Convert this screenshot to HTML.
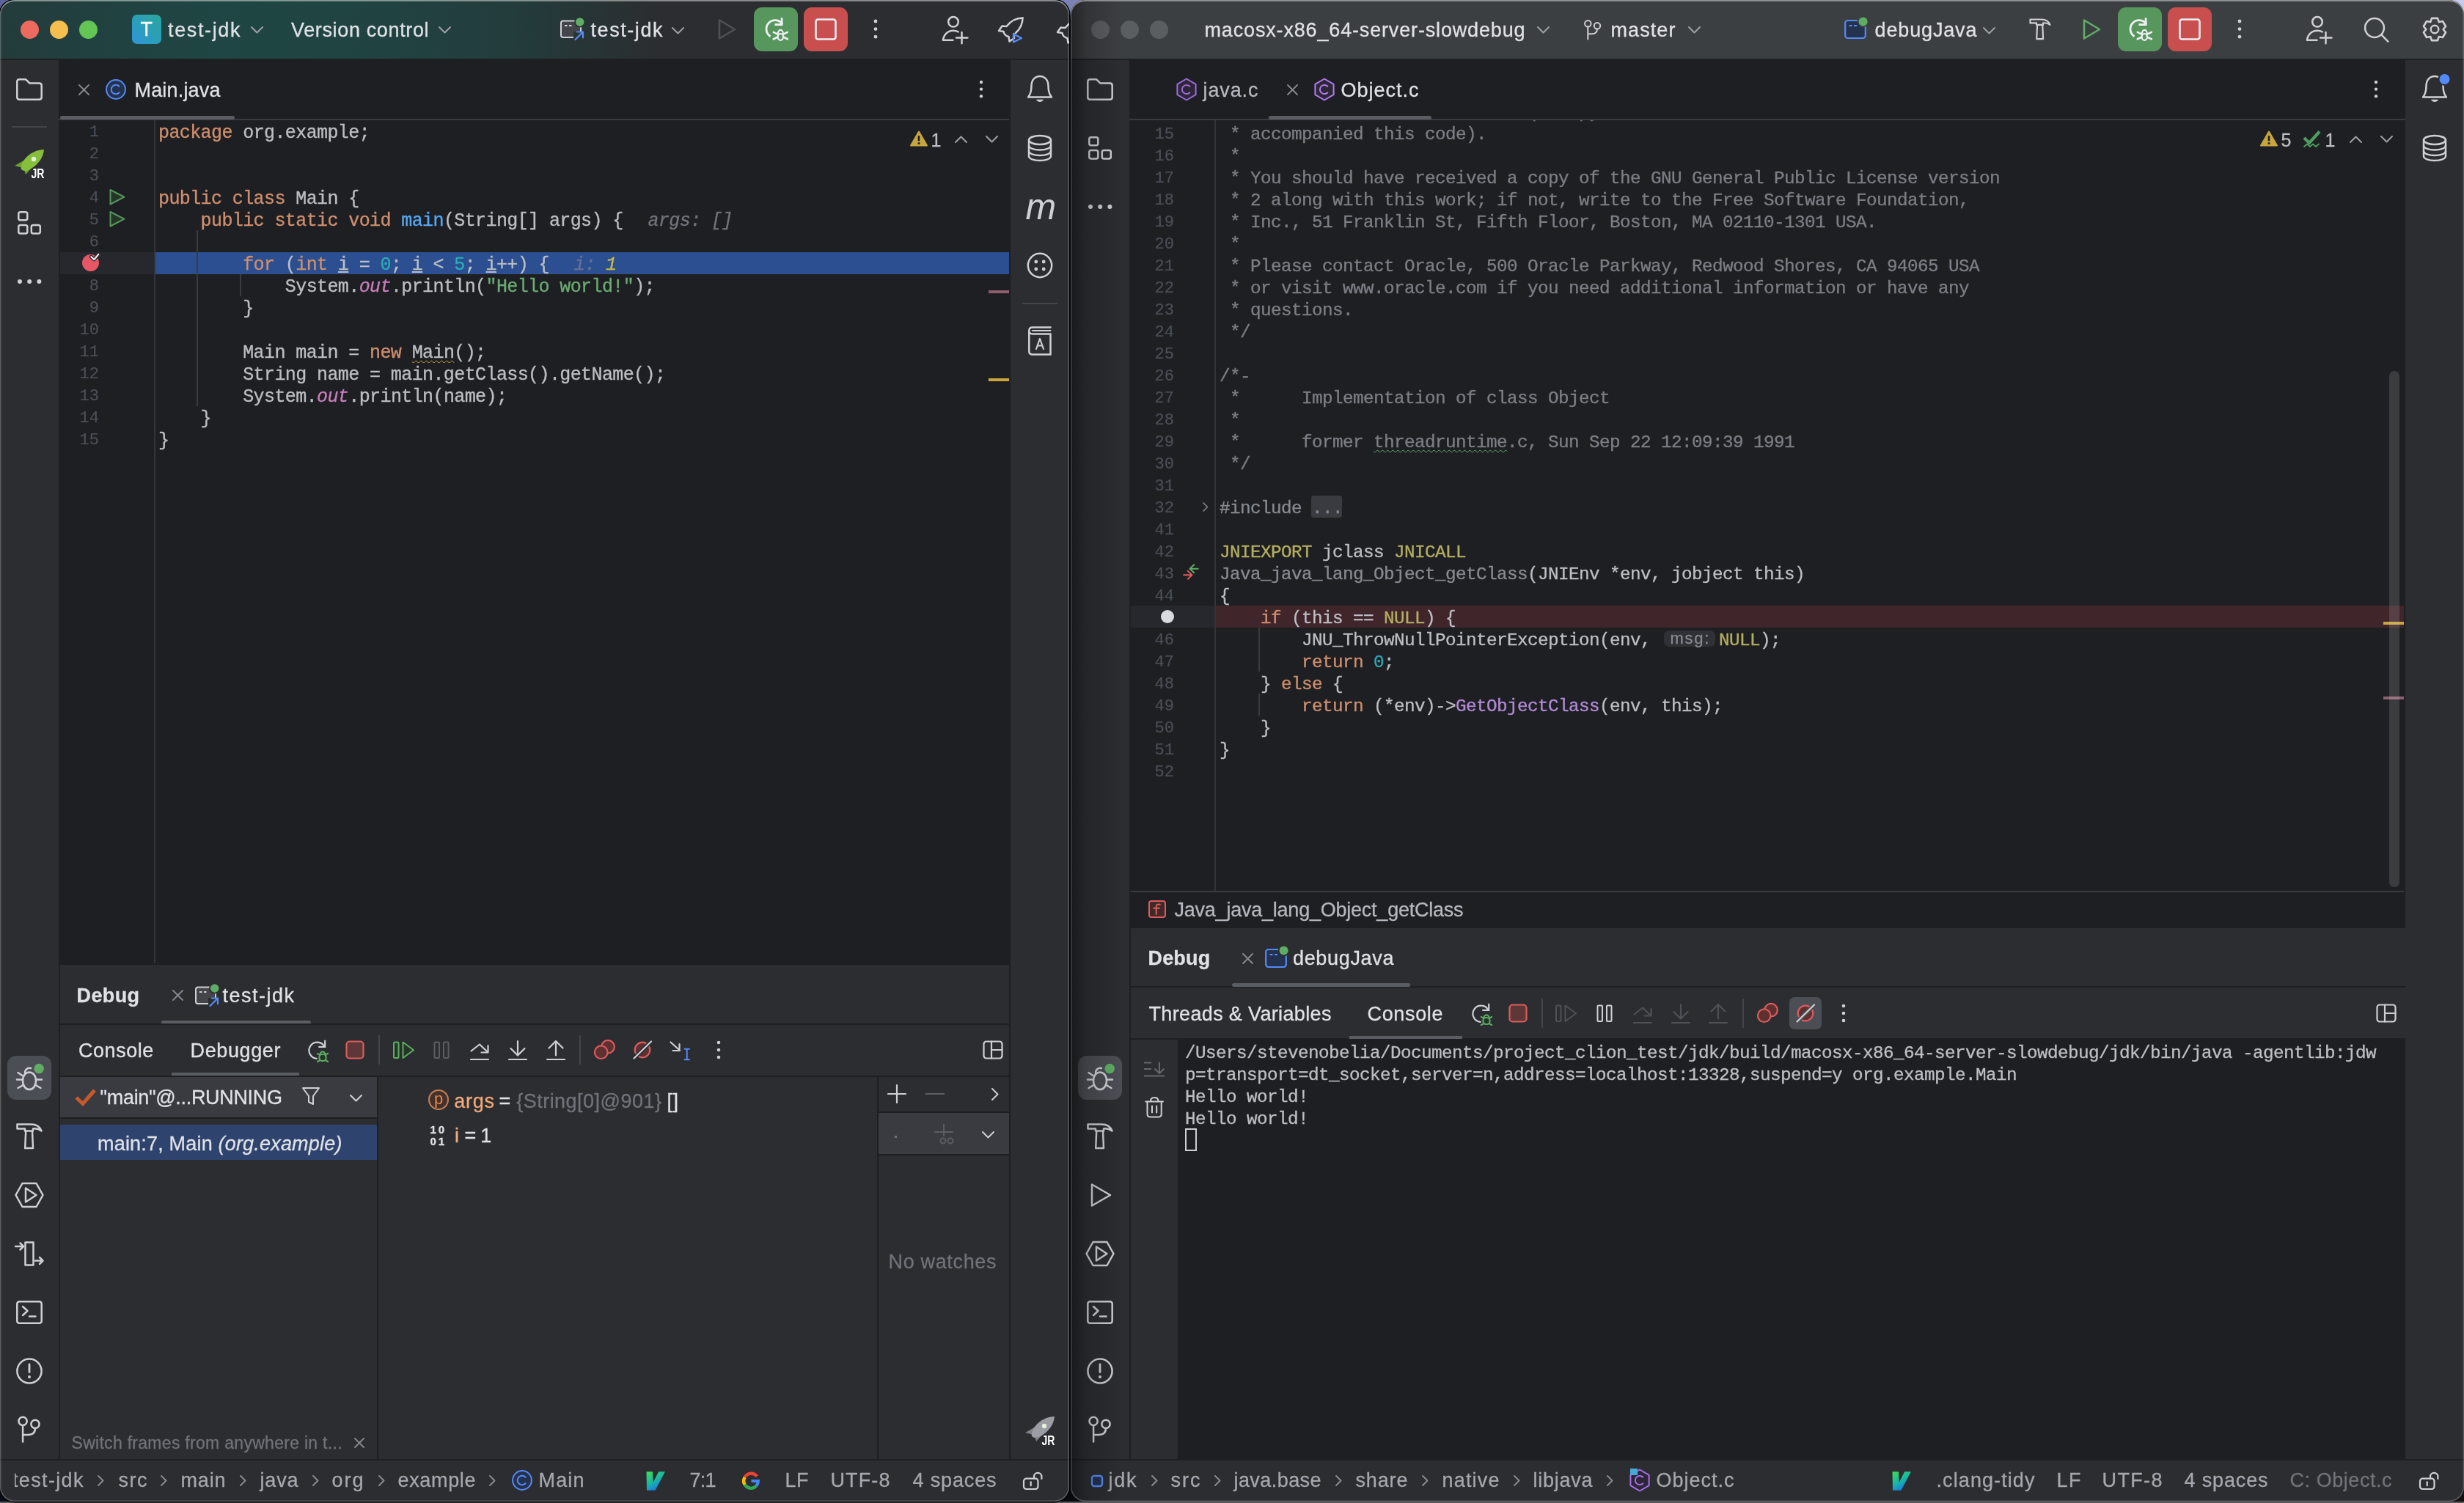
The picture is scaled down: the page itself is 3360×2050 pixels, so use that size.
<!DOCTYPE html>
<html lang="en"><head><meta charset="utf-8"><title>IDE debug session</title>
<style>
html,body{margin:0;padding:0}
body{width:3360px;height:2050px;position:relative;overflow:hidden;background:#07080c;font-family:"Liberation Sans",sans-serif;}
div,svg,span.t,pre{position:absolute}
span.t{white-space:pre;-webkit-text-stroke:0.3px}
span.t i{font-style:italic}
pre{margin:0;font-family:"Liberation Mono",monospace;white-space:pre;-webkit-text-stroke:0.35px}
.win{overflow:hidden}
.win>div{will-change:transform;}
</style></head>
<body>
<div style="left:0px;top:0px;width:3360px;height:2050px;background:#08090d;"></div>
<div style="left:1400px;top:0px;width:120px;height:26px;background:#7a82b6;background:linear-gradient(180deg,#7a82b6 0,#7a82b6 55%,#2a2d45 100%);"></div>
<div style="left:0px;top:0px;width:30px;height:30px;background:#5a639a;"></div>
<div style="left:0px;top:2048px;width:3360px;height:2px;background:#58595b;"></div>
<div style="left:3330px;top:0px;width:30px;height:30px;background:#c6c9e9;"></div>
<div style="left:3330px;top:2020px;width:30px;height:28px;background:#15100f;"></div>
<div style="left:0px;top:2020px;width:14px;height:28px;background:#0a0c18;"></div>
<div class="win" style="left:1460px;top:0;width:1900px;height:2048px;border-radius:20px;background:#2b2d30;"><div style="left:-1460px;top:0;width:3360px;height:2050px">
<div style="left:1460px;top:0px;width:1900px;height:80px;background:#3c3f41;"></div>
<div style="left:1460px;top:80px;width:1900px;height:2px;background:#1e1f22;"></div>
<div style="left:1460px;top:82px;width:80px;height:1908px;background:#2b2d30;"></div>
<div style="left:1540px;top:82px;width:1740px;height:1184px;background:#1e1f22;"></div>
<div style="left:1540px;top:162px;width:1740px;height:2px;background:#393b40;"></div>
<div style="left:3280px;top:82px;width:80px;height:1908px;background:#2b2d30;"></div>
<div style="left:1540px;top:1266px;width:1740px;height:724px;background:#2b2d30;"></div>
<div style="left:1540px;top:1345px;width:1740px;height:2px;background:#1e1f22;"></div>
<div style="left:1540px;top:1416px;width:1740px;height:2px;background:#1e1f22;"></div>
<div style="left:1606px;top:1418px;width:1674px;height:572px;background:#1e1f22;"></div>
<div style="left:1540px;top:1266px;width:2px;height:724px;background:#1e1f22;"></div>
<div style="left:1460px;top:1990px;width:1900px;height:2px;background:#1e1f22;"></div>
<div style="left:1460px;top:1992px;width:1900px;height:56px;background:#2b2d30;"></div>
<div style="left:1487.5px;top:27.5px;width:25px;height:25px;border-radius:50%;background:#5b5e60"></div>
<div style="left:1527.5px;top:27.5px;width:25px;height:25px;border-radius:50%;background:#5b5e60"></div>
<div style="left:1567.5px;top:27.5px;width:25px;height:25px;border-radius:50%;background:#5b5e60"></div>
<span id="t0" class="t" style="left:1642.5px;top:20.8px;line-height:40px;font-size:27px;color:#dfe1e5;letter-spacing:0.84px;">macosx-x86_64-server-slowdebug</span>
<svg style="left:2094.5px;top:34.5px;" width="19" height="12" viewBox="0 0 19 12" fill="none"><path d="M2 2 L9.5 9.5 L17 2" stroke="#9da0a8" stroke-width="2" stroke-linecap="round" stroke-linejoin="round"/></svg>
<span id="t1" class="t" style="left:2196.5px;top:20.8px;line-height:40px;font-size:27px;color:#dfe1e5;letter-spacing:1.09px;">master</span>
<svg style="left:2300.5px;top:34.5px;" width="19" height="12" viewBox="0 0 19 12" fill="none"><path d="M2 2 L9.5 9.5 L17 2" stroke="#9da0a8" stroke-width="2" stroke-linecap="round" stroke-linejoin="round"/></svg>
<span id="t2" class="t" style="left:2556.5px;top:20.8px;line-height:40px;font-size:27px;color:#dfe1e5;letter-spacing:0.86px;">debugJava</span>
<svg style="left:2702.5px;top:35.5px;" width="19" height="12" viewBox="0 0 19 12" fill="none"><path d="M2 2 L9.5 9.5 L17 2" stroke="#9da0a8" stroke-width="2" stroke-linecap="round" stroke-linejoin="round"/></svg>
<div style="left:2888px;top:10px;width:60px;height:60px;border-radius:11px;background:#57965c"></div>
<div style="left:2956px;top:10px;width:60px;height:60px;border-radius:11px;background:#c94f4f"></div>
<svg style="left:2970px;top:24px;" width="32" height="32" viewBox="0 0 32 32" fill="none"><rect x="2.5" y="2.5" width="27" height="27" rx="3" stroke="#eef0f3" stroke-width="2.6"/></svg>
<svg style="left:2837px;top:22px;" width="32" height="36" viewBox="0 0 32 36" fill="none"><path d="M5 5.5 L26 18 L5 30.5 Z" stroke="#5fad65" stroke-width="2.6" stroke-linejoin="round"/></svg>
<svg style="left:3050px;top:25.4px;" width="8" height="29.2" viewBox="0 0 8 29.2" fill="none"><circle cx="4" cy="4.0" r="2.4" fill="#ced0d6"/><circle cx="4" cy="14.6" r="2.4" fill="#ced0d6"/><circle cx="4" cy="25.2" r="2.4" fill="#ced0d6"/></svg>
<span id="t3" class="t" style="left:1640.5px;top:102.8px;line-height:40px;font-size:27px;color:#b4b8bf;letter-spacing:0.89px;">java.c</span>
<svg style="left:1754.5px;top:115.0px;" width="15" height="15" viewBox="0 0 15 15" fill="none"><path d="M1 1 L14 14 M14 1 L1 14" stroke="#868a91" stroke-width="1.8" stroke-linecap="round"/></svg>
<span id="t4" class="t" style="left:1828.5px;top:102.8px;line-height:40px;font-size:27px;color:#dfe1e5;letter-spacing:0.99px;">Object.c</span>
<div style="left:1730px;top:158px;width:222px;height:5px;border-radius:3px;background:#5a5d63"></div>
<svg style="left:3235.5px;top:108.4px;" width="8" height="27.2" viewBox="0 0 8 27.2" fill="none"><circle cx="4" cy="4.0" r="2.2" fill="#ced0d6"/><circle cx="4" cy="13.6" r="2.2" fill="#ced0d6"/><circle cx="4" cy="23.2" r="2.2" fill="#ced0d6"/></svg>
<div style="left:1656px;top:164px;width:2px;height:1052px;background:#313438;"></div>
<div style="left:1542px;top:826px;width:114px;height:30px;background:#26282e;"></div>
<div style="left:1658px;top:826px;width:1620px;height:30px;background:#40252b;"></div>
<div style="left:1716px;top:856px;width:2px;height:60px;background:#393b40;"></div>
<div style="left:1716px;top:946px;width:2px;height:30px;background:#393b40;"></div>
<div style="left:3250px;top:848px;width:28px;height:4px;background:#c9a53e;"></div>
<div style="left:3250px;top:950px;width:28px;height:4px;background:#8f5f6e;"></div>
<div style="left:3258px;top:506px;width:14px;height:704px;border-radius:7px;background:rgba(255,255,255,.13)"></div>
<div style="left:1542px;top:1215px;width:1736px;height:2px;background:#393b40;"></div>
<div style="left:1663px;top:164px;width:1600px;height:12px;overflow:hidden"><pre style="left:0;top:-25.3px;line-height:30px;font-size:24.3px;letter-spacing:-0.58px;color:#7a7e85"> * version 2 for more details (a copy is included in the LICENSE file that</pre></div>
<pre style="left:1663px;top:168.7px;line-height:30px;font-size:24.3px;letter-spacing:-0.58px;"><span style="color:#7a7e85;"> * accompanied this code).</span></pre>
<pre style="left:1663px;top:198.7px;line-height:30px;font-size:24.3px;letter-spacing:-0.58px;"><span style="color:#7a7e85;"> *</span></pre>
<pre style="left:1663px;top:228.7px;line-height:30px;font-size:24.3px;letter-spacing:-0.58px;"><span style="color:#7a7e85;"> * You should have received a copy of the GNU General Public License version</span></pre>
<pre style="left:1663px;top:258.7px;line-height:30px;font-size:24.3px;letter-spacing:-0.58px;"><span style="color:#7a7e85;"> * 2 along with this work; if not, write to the Free Software Foundation,</span></pre>
<pre style="left:1663px;top:288.7px;line-height:30px;font-size:24.3px;letter-spacing:-0.58px;"><span style="color:#7a7e85;"> * Inc., 51 Franklin St, Fifth Floor, Boston, MA 02110-1301 USA.</span></pre>
<pre style="left:1663px;top:318.7px;line-height:30px;font-size:24.3px;letter-spacing:-0.58px;"><span style="color:#7a7e85;"> *</span></pre>
<pre style="left:1663px;top:348.7px;line-height:30px;font-size:24.3px;letter-spacing:-0.58px;"><span style="color:#7a7e85;"> * Please contact Oracle, 500 Oracle Parkway, Redwood Shores, CA 94065 USA</span></pre>
<pre style="left:1663px;top:378.7px;line-height:30px;font-size:24.3px;letter-spacing:-0.58px;"><span style="color:#7a7e85;"> * or visit www.oracle.com if you need additional information or have any</span></pre>
<pre style="left:1663px;top:408.7px;line-height:30px;font-size:24.3px;letter-spacing:-0.58px;"><span style="color:#7a7e85;"> * questions.</span></pre>
<pre style="left:1663px;top:438.7px;line-height:30px;font-size:24.3px;letter-spacing:-0.58px;"><span style="color:#7a7e85;"> */</span></pre>
<pre style="left:1663px;top:498.7px;line-height:30px;font-size:24.3px;letter-spacing:-0.58px;"><span style="color:#7a7e85;">/*-</span></pre>
<pre style="left:1663px;top:528.7px;line-height:30px;font-size:24.3px;letter-spacing:-0.58px;"><span style="color:#7a7e85;"> *      Implementation of class Object</span></pre>
<pre style="left:1663px;top:558.7px;line-height:30px;font-size:24.3px;letter-spacing:-0.58px;"><span style="color:#7a7e85;"> *</span></pre>
<pre style="left:1663px;top:588.7px;line-height:30px;font-size:24.3px;letter-spacing:-0.58px;"><span style="color:#7a7e85;"> *      former </span><span style="color:#7a7e85;text-decoration:underline wavy #5fad65;text-decoration-thickness:1.2px;text-underline-offset:2.5px;">threadruntime</span><span style="color:#7a7e85;">.c, Sun Sep 22 12:09:39 1991</span></pre>
<pre style="left:1663px;top:618.7px;line-height:30px;font-size:24.3px;letter-spacing:-0.58px;"><span style="color:#7a7e85;"> */</span></pre>
<div style="left:1788px;top:676px;width:42px;height:30px;background:#393b40;border-radius:3px"></div>
<pre style="left:1663px;top:678.7px;line-height:30px;font-size:24.3px;letter-spacing:-0.58px;"><span style="color:#868a91;">#include </span><span style="color:#868a91;">...</span></pre>
<pre style="left:1663px;top:738.7px;line-height:30px;font-size:24.3px;letter-spacing:-0.58px;"><span style="color:#b3ae60;">JNIEXPORT</span><span style="color:#bcbec4;"> jclass </span><span style="color:#b3ae60;">JNICALL</span></pre>
<pre style="left:1663px;top:768.7px;line-height:30px;font-size:24.3px;letter-spacing:-0.58px;"><span style="color:#868a91;">Java_java_lang_Object_getClass</span><span style="color:#bcbec4;">(JNIEnv *env, jobject this)</span></pre>
<pre style="left:1663px;top:798.7px;line-height:30px;font-size:24.3px;letter-spacing:-0.58px;"><span style="color:#bcbec4;">{</span></pre>
<pre style="left:1663px;top:828.7px;line-height:30px;font-size:24.3px;letter-spacing:-0.58px;"><span style="color:#cf8e6d;">    if</span><span style="color:#bcbec4;"> (this == </span><span style="color:#b3ae60;">NULL</span><span style="color:#bcbec4;">) {</span></pre>
<pre style="left:1663px;top:858.7px;line-height:30px;font-size:24.3px;letter-spacing:-0.58px;"><span style="color:#bcbec4;">        JNU_ThrowNullPointerException(env, </span></pre>
<div style="left:2269px;top:860px;width:70px;height:22px;background:#2f3136;border-radius:7px"></div>
<span id="t5" class="t" style="left:2277.5px;top:851.3px;line-height:40px;font-size:22px;color:#868a91;letter-spacing:1.77px;">msg:</span>
<pre style="left:2344px;top:858.7px;line-height:30px;font-size:24.3px;letter-spacing:-0.58px;"><span style="color:#b3ae60;">NULL</span><span style="color:#bcbec4;">);</span></pre>
<pre style="left:1663px;top:888.7px;line-height:30px;font-size:24.3px;letter-spacing:-0.58px;"><span style="color:#cf8e6d;">        return</span><span style="color:#bcbec4;"> </span><span style="color:#2aacb8;">0</span><span style="color:#bcbec4;">;</span></pre>
<pre style="left:1663px;top:918.7px;line-height:30px;font-size:24.3px;letter-spacing:-0.58px;"><span style="color:#bcbec4;">    } </span><span style="color:#cf8e6d;">else</span><span style="color:#bcbec4;"> {</span></pre>
<pre style="left:1663px;top:948.7px;line-height:30px;font-size:24.3px;letter-spacing:-0.58px;"><span style="color:#cf8e6d;">        return</span><span style="color:#bcbec4;"> (*env)-&gt;</span><span style="color:#b189d6;">GetObjectClass</span><span style="color:#bcbec4;">(env, this);</span></pre>
<pre style="left:1663px;top:978.7px;line-height:30px;font-size:24.3px;letter-spacing:-0.58px;"><span style="color:#bcbec4;">    }</span></pre>
<pre style="left:1663px;top:1008.7px;line-height:30px;font-size:24.3px;letter-spacing:-0.58px;"><span style="color:#bcbec4;">}</span></pre>
<pre style="left:1521px;width:80px;text-align:right;top:168.6px;line-height:30px;font-size:22px;letter-spacing:0;-webkit-text-stroke:0.15px;color:#4b5059">15</pre>
<pre style="left:1521px;width:80px;text-align:right;top:198.6px;line-height:30px;font-size:22px;letter-spacing:0;-webkit-text-stroke:0.15px;color:#4b5059">16</pre>
<pre style="left:1521px;width:80px;text-align:right;top:228.6px;line-height:30px;font-size:22px;letter-spacing:0;-webkit-text-stroke:0.15px;color:#4b5059">17</pre>
<pre style="left:1521px;width:80px;text-align:right;top:258.6px;line-height:30px;font-size:22px;letter-spacing:0;-webkit-text-stroke:0.15px;color:#4b5059">18</pre>
<pre style="left:1521px;width:80px;text-align:right;top:288.6px;line-height:30px;font-size:22px;letter-spacing:0;-webkit-text-stroke:0.15px;color:#4b5059">19</pre>
<pre style="left:1521px;width:80px;text-align:right;top:318.6px;line-height:30px;font-size:22px;letter-spacing:0;-webkit-text-stroke:0.15px;color:#4b5059">20</pre>
<pre style="left:1521px;width:80px;text-align:right;top:348.6px;line-height:30px;font-size:22px;letter-spacing:0;-webkit-text-stroke:0.15px;color:#4b5059">21</pre>
<pre style="left:1521px;width:80px;text-align:right;top:378.6px;line-height:30px;font-size:22px;letter-spacing:0;-webkit-text-stroke:0.15px;color:#4b5059">22</pre>
<pre style="left:1521px;width:80px;text-align:right;top:408.6px;line-height:30px;font-size:22px;letter-spacing:0;-webkit-text-stroke:0.15px;color:#4b5059">23</pre>
<pre style="left:1521px;width:80px;text-align:right;top:438.6px;line-height:30px;font-size:22px;letter-spacing:0;-webkit-text-stroke:0.15px;color:#4b5059">24</pre>
<pre style="left:1521px;width:80px;text-align:right;top:468.6px;line-height:30px;font-size:22px;letter-spacing:0;-webkit-text-stroke:0.15px;color:#4b5059">25</pre>
<pre style="left:1521px;width:80px;text-align:right;top:498.6px;line-height:30px;font-size:22px;letter-spacing:0;-webkit-text-stroke:0.15px;color:#4b5059">26</pre>
<pre style="left:1521px;width:80px;text-align:right;top:528.6px;line-height:30px;font-size:22px;letter-spacing:0;-webkit-text-stroke:0.15px;color:#4b5059">27</pre>
<pre style="left:1521px;width:80px;text-align:right;top:558.6px;line-height:30px;font-size:22px;letter-spacing:0;-webkit-text-stroke:0.15px;color:#4b5059">28</pre>
<pre style="left:1521px;width:80px;text-align:right;top:588.6px;line-height:30px;font-size:22px;letter-spacing:0;-webkit-text-stroke:0.15px;color:#4b5059">29</pre>
<pre style="left:1521px;width:80px;text-align:right;top:618.6px;line-height:30px;font-size:22px;letter-spacing:0;-webkit-text-stroke:0.15px;color:#4b5059">30</pre>
<pre style="left:1521px;width:80px;text-align:right;top:648.6px;line-height:30px;font-size:22px;letter-spacing:0;-webkit-text-stroke:0.15px;color:#4b5059">31</pre>
<pre style="left:1521px;width:80px;text-align:right;top:678.6px;line-height:30px;font-size:22px;letter-spacing:0;-webkit-text-stroke:0.15px;color:#4b5059">32</pre>
<pre style="left:1521px;width:80px;text-align:right;top:708.6px;line-height:30px;font-size:22px;letter-spacing:0;-webkit-text-stroke:0.15px;color:#4b5059">41</pre>
<pre style="left:1521px;width:80px;text-align:right;top:738.6px;line-height:30px;font-size:22px;letter-spacing:0;-webkit-text-stroke:0.15px;color:#4b5059">42</pre>
<pre style="left:1521px;width:80px;text-align:right;top:768.6px;line-height:30px;font-size:22px;letter-spacing:0;-webkit-text-stroke:0.15px;color:#4b5059">43</pre>
<pre style="left:1521px;width:80px;text-align:right;top:798.6px;line-height:30px;font-size:22px;letter-spacing:0;-webkit-text-stroke:0.15px;color:#4b5059">44</pre>
<pre style="left:1521px;width:80px;text-align:right;top:858.6px;line-height:30px;font-size:22px;letter-spacing:0;-webkit-text-stroke:0.15px;color:#4b5059">46</pre>
<pre style="left:1521px;width:80px;text-align:right;top:888.6px;line-height:30px;font-size:22px;letter-spacing:0;-webkit-text-stroke:0.15px;color:#4b5059">47</pre>
<pre style="left:1521px;width:80px;text-align:right;top:918.6px;line-height:30px;font-size:22px;letter-spacing:0;-webkit-text-stroke:0.15px;color:#4b5059">48</pre>
<pre style="left:1521px;width:80px;text-align:right;top:948.6px;line-height:30px;font-size:22px;letter-spacing:0;-webkit-text-stroke:0.15px;color:#4b5059">49</pre>
<pre style="left:1521px;width:80px;text-align:right;top:978.6px;line-height:30px;font-size:22px;letter-spacing:0;-webkit-text-stroke:0.15px;color:#4b5059">50</pre>
<pre style="left:1521px;width:80px;text-align:right;top:1008.6px;line-height:30px;font-size:22px;letter-spacing:0;-webkit-text-stroke:0.15px;color:#4b5059">51</pre>
<pre style="left:1521px;width:80px;text-align:right;top:1038.6px;line-height:30px;font-size:22px;letter-spacing:0;-webkit-text-stroke:0.15px;color:#4b5059">52</pre>
<svg style="left:1639.0px;top:683.5px;" width="10" height="15" viewBox="0 0 10 15" fill="none"><path d="M2 2 L7.5 7.5 L2 13" stroke="#6f737a" stroke-width="1.8" stroke-linecap="round" stroke-linejoin="round"/></svg>
<div style="left:1583px;top:832px;width:18px;height:18px;border-radius:50%;background:#d9dadd"></div>
<svg style="left:3081px;top:177px;" width="26" height="24" viewBox="0 0 26 24" fill="none"><path d="M13 2.5 L24 21.5 H2 Z" fill="#c9a53e" stroke="#c9a53e" stroke-width="2" stroke-linejoin="round"/><rect x="11.7" y="8" width="2.6" height="7.5" rx="1" fill="#1e1f22"/><circle cx="13" cy="18.6" r="1.5" fill="#1e1f22"/></svg>
<span id="t6" class="t" style="left:3110.5px;top:170.8px;line-height:40px;font-size:25px;color:#bcbec4;">5</span>
<svg style="left:3138px;top:176px;" width="30" height="28" viewBox="0 0 30 28" fill="none"><path d="M4 12 L11 19 L25 3.5" stroke="#4e9f5c" stroke-width="4.2" stroke-linejoin="miter"/><path d="M4 24 L8 20.5 L12 24 L16 20.5 L20 24 L24 20.5" stroke="#4e9f5c" stroke-width="1.8" stroke-linejoin="round" stroke-linecap="round"/></svg>
<span id="t7" class="t" style="left:3170.5px;top:170.8px;line-height:40px;font-size:25px;color:#bcbec4;">1</span>
<svg style="left:3202.5px;top:184.0px;" width="19" height="12" viewBox="0 0 19 12" fill="none"><path d="M2 10 L9.5 2.5 L17 10" stroke="#9da0a8" stroke-width="2" stroke-linecap="round" stroke-linejoin="round"/></svg>
<svg style="left:3244.5px;top:184.0px;" width="19" height="12" viewBox="0 0 19 12" fill="none"><path d="M2 2 L9.5 9.5 L17 2" stroke="#9da0a8" stroke-width="2" stroke-linecap="round" stroke-linejoin="round"/></svg>
<span id="t8" class="t" style="left:1601.5px;top:1220.8px;line-height:40px;font-size:27px;color:#b4b8bf;letter-spacing:-0.23px;">Java_java_lang_Object_getClass</span>
<span id="t9" class="t" style="left:1565.5px;top:1287.3px;line-height:40px;font-size:27px;color:#dfe1e5;font-weight:700;letter-spacing:0.18px;">Debug</span>
<svg style="left:1694.0px;top:1299.5px;" width="15" height="15" viewBox="0 0 15 15" fill="none"><path d="M1 1 L14 14 M14 1 L1 14" stroke="#868a91" stroke-width="1.8" stroke-linecap="round"/></svg>
<span id="t10" class="t" style="left:1763.0px;top:1287.3px;line-height:40px;font-size:27px;color:#dfe1e5;letter-spacing:0.67px;">debugJava</span>
<div style="left:1680px;top:1341px;width:243px;height:5px;border-radius:3px;background:#5a5d63"></div>
<span id="t11" class="t" style="left:1566.5px;top:1362.8px;line-height:40px;font-size:27px;color:#dfe1e5;letter-spacing:0.35px;">Threads &amp; Variables</span>
<span id="t12" class="t" style="left:1864.5px;top:1362.8px;line-height:40px;font-size:27px;color:#dfe1e5;letter-spacing:0.66px;">Console</span>
<div style="left:1840px;top:1413px;width:154px;height:4px;background:#5a5d63"></div>
<div style="left:1542px;top:1418px;width:64px;height:572px;background:#2b2d30;"></div>
<pre style="left:1616px;top:1421.7px;line-height:30px;font-size:24.3px;letter-spacing:-0.58px;"><span style="color:#bcbec4;">/Users/stevenobelia/Documents/project_clion_test/jdk/build/macosx-x86_64-server-slowdebug/jdk/bin/java -agentlib:jdw</span></pre>
<pre style="left:1616px;top:1451.7px;line-height:30px;font-size:24.3px;letter-spacing:-0.58px;"><span style="color:#bcbec4;">p=transport=dt_socket,server=n,address=localhost:13328,suspend=y org.example.Main</span></pre>
<pre style="left:1616px;top:1481.7px;line-height:30px;font-size:24.3px;letter-spacing:-0.58px;"><span style="color:#bcbec4;">Hello world!</span></pre>
<pre style="left:1616px;top:1511.7px;line-height:30px;font-size:24.3px;letter-spacing:-0.58px;"><span style="color:#bcbec4;">Hello world!</span></pre>
<div style="left:1616px;top:1539px;width:12px;height:27px;border:2px solid #ced0d6"></div>
<span id="t13" class="t" style="left:1511.5px;top:1999.3px;line-height:40px;font-size:27px;color:#a4a7ae;letter-spacing:1.74px;">jdk</span>
<svg style="left:1568.5px;top:2010.5px;" width="11" height="17" viewBox="0 0 11 17" fill="none"><path d="M2 2 L8.5 8.5 L2 15" stroke="#868a91" stroke-width="2" stroke-linecap="round" stroke-linejoin="round"/></svg>
<svg style="left:1654.5px;top:2010.5px;" width="11" height="17" viewBox="0 0 11 17" fill="none"><path d="M2 2 L8.5 8.5 L2 15" stroke="#868a91" stroke-width="2" stroke-linecap="round" stroke-linejoin="round"/></svg>
<svg style="left:1819.5px;top:2010.5px;" width="11" height="17" viewBox="0 0 11 17" fill="none"><path d="M2 2 L8.5 8.5 L2 15" stroke="#868a91" stroke-width="2" stroke-linecap="round" stroke-linejoin="round"/></svg>
<svg style="left:1937.5px;top:2010.5px;" width="11" height="17" viewBox="0 0 11 17" fill="none"><path d="M2 2 L8.5 8.5 L2 15" stroke="#868a91" stroke-width="2" stroke-linecap="round" stroke-linejoin="round"/></svg>
<svg style="left:2062.5px;top:2010.5px;" width="11" height="17" viewBox="0 0 11 17" fill="none"><path d="M2 2 L8.5 8.5 L2 15" stroke="#868a91" stroke-width="2" stroke-linecap="round" stroke-linejoin="round"/></svg>
<svg style="left:2189.5px;top:2010.5px;" width="11" height="17" viewBox="0 0 11 17" fill="none"><path d="M2 2 L8.5 8.5 L2 15" stroke="#868a91" stroke-width="2" stroke-linecap="round" stroke-linejoin="round"/></svg>
<span id="t14" class="t" style="left:1596.5px;top:1999.3px;line-height:40px;font-size:27px;color:#a4a7ae;letter-spacing:2.00px;">src</span>
<span id="t15" class="t" style="left:1682.5px;top:1999.3px;line-height:40px;font-size:27px;color:#a4a7ae;letter-spacing:0.43px;">java.base</span>
<span id="t16" class="t" style="left:1848.5px;top:1999.3px;line-height:40px;font-size:27px;color:#a4a7ae;letter-spacing:0.86px;">share</span>
<span id="t17" class="t" style="left:1966.5px;top:1999.3px;line-height:40px;font-size:27px;color:#a4a7ae;letter-spacing:1.19px;">native</span>
<span id="t18" class="t" style="left:2090.5px;top:1999.3px;line-height:40px;font-size:27px;color:#a4a7ae;letter-spacing:0.74px;">libjava</span>
<span id="t19" class="t" style="left:2258.5px;top:1999.3px;line-height:40px;font-size:27px;color:#a4a7ae;letter-spacing:0.99px;">Object.c</span>
<span id="t20" class="t" style="left:2640.5px;top:1999.3px;line-height:40px;font-size:27px;color:#a4a7ae;letter-spacing:1.09px;">.clang-tidy</span>
<span id="t21" class="t" style="left:2804.5px;top:1999.3px;line-height:40px;font-size:27px;color:#a4a7ae;letter-spacing:1.48px;">LF</span>
<span id="t22" class="t" style="left:2866.5px;top:1999.3px;line-height:40px;font-size:27px;color:#a4a7ae;letter-spacing:1.38px;">UTF-8</span>
<span id="t23" class="t" style="left:2978.5px;top:1999.3px;line-height:40px;font-size:27px;color:#a4a7ae;letter-spacing:0.85px;">4 spaces</span>
<span id="t24" class="t" style="left:3122.5px;top:1999.3px;line-height:40px;font-size:27px;color:#6f737a;letter-spacing:0.55px;">C: Object.c</span>
<svg style="left:2143.5px;top:13.0px;" width="56" height="56" viewBox="-28 -28 56 56" fill="none"><g transform="scale(0.75)"><circle cx="-8.9" cy="-11.6" r="5.6" stroke="#ced0d6" stroke-width="2.7" stroke-linecap="round" stroke-linejoin="round"/><circle cx="8" cy="-7.6" r="5.6" stroke="#ced0d6" stroke-width="2.7" stroke-linecap="round" stroke-linejoin="round"/><path d="M-8.9 -6 V16.5 M8 -2 C8 5 4 7 -2 7 H-8.9" stroke="#ced0d6" stroke-width="2.7" stroke-linecap="round" stroke-linejoin="round"/></g></svg>
<svg style="left:2502.0px;top:12.0px;" width="56" height="56" viewBox="-28 -28 56 56" fill="none"><rect x="-13.8" y="-12" width="27.6" height="24" rx="3.5" stroke="#548af7" stroke-width="2.2" fill="#25324d"/><path d="M-8.5 -5 H-4.5 M-2 -5 H2" stroke="#548af7" stroke-width="2"/><circle cx="10.6" cy="-10.5" r="7.8" fill="#3c3f41"/><circle cx="10.6" cy="-10.5" r="6" fill="#5fad65"/></svg>
<svg style="left:2754.0px;top:12.0px;" width="56" height="56" viewBox="-28 -28 56 56" fill="none"><g transform="scale(0.82)"><path d="M-16.5 -16.5 H2 C9 -16.5 14.5 -13 16.5 -7.5 C13 -10 9 -11 5 -10.5 V-7.5 H-6 V-10.5 H-16.5 Z" stroke="#ced0d6" stroke-width="2.6" stroke-linecap="round" stroke-linejoin="round"/><path d="M-4.8 -7 L-5.8 16 H5 L4 -7" stroke="#ced0d6" stroke-width="2.6" stroke-linecap="round" stroke-linejoin="round"/></g></svg>
<svg style="left:2890.0px;top:12.0px;" width="56" height="56" viewBox="-28 -28 56 56" fill="none"><path d="M8.95 -7.1 A12 12 0 1 0 -7.46 9.7" stroke="#eef0f3" stroke-width="2.8"/><path d="M-1.6 -6.5 H8.1 V-15.8" stroke="#eef0f3" stroke-width="2.8" stroke-linejoin="miter"/><path d="M-3.2 3.9 L15.8 13.3 M15.8 3.9 L-3.2 13.3" stroke="#eef0f3" stroke-width="2.7" stroke-linecap="round"/><path d="M2.7 6.5 A3.6 5.6 0 0 1 9.9 6.5" stroke="#eef0f3" stroke-width="2.2"/><ellipse cx="6.3" cy="10.4" rx="3.6" ry="4.4" stroke="#eef0f3" stroke-width="2.2" fill="#57965c"/></svg>
<svg style="left:3132.0px;top:12.0px;" width="56" height="56" viewBox="-28 -28 56 56" fill="none"><circle cx="0" cy="-10.2" r="6.8" stroke="#ced0d6" stroke-width="2.5" stroke-linecap="round" stroke-linejoin="round"/><path d="M-0.5 14.7 H-14 C-13 7 -7.5 1.8 0 1.8 C2.5 1.8 4.7 2.4 6.6 3.4" stroke="#ced0d6" stroke-width="2.5" stroke-linecap="round" stroke-linejoin="round"/><path d="M4 11.5 H19.5 M11.5 4 V19.3" stroke="#ced0d6" stroke-width="2.5" stroke-linecap="round" stroke-linejoin="round"/></svg>
<svg style="left:3212.0px;top:12.0px;" width="56" height="56" viewBox="-28 -28 56 56" fill="none"><circle cx="-2" cy="-2" r="12.9" stroke="#ced0d6" stroke-width="2.5" stroke-linecap="round" stroke-linejoin="round"/><path d="M7.3 7.3 L16.4 16.6" stroke="#ced0d6" stroke-width="2.5" stroke-linecap="round" stroke-linejoin="round"/></svg>
<svg style="left:3292.0px;top:12.0px;" width="56" height="56" viewBox="-28 -28 56 56" fill="none"><path d="M-4.0 -15.1 L4.0 -15.1 L5.8 -10.0 L11.0 -11.0 L15.1 -4.0 L11.6 0.0 L15.1 4.0 L11.0 11.0 L5.8 10.0 L4.0 15.1 L-4.0 15.1 L-5.8 10.0 L-11.0 11.0 L-15.1 4.0 L-11.6 0.0 L-15.1 -4.0 L-11.0 -11.0 L-5.8 -10.0 Z" stroke="#ced0d6" stroke-width="2.6" stroke-linecap="round" stroke-linejoin="round"/><circle cx="0" cy="0" r="5.3" stroke="#ced0d6" stroke-width="2.4" stroke-linecap="round" stroke-linejoin="round"/></svg>
<svg style="left:1472.0px;top:94.0px;" width="56" height="56" viewBox="-28 -28 56 56" fill="none"><path d="M-16.7 -10.5 q0 -3.2 3.2 -3.2 h8.7 l5.3 5.3 h13 q3.2 0 3.2 3.2 v15.7 q0 3.2 -3.2 3.2 h-27 q-3.2 0 -3.2 -3.2 z" stroke="#ced0d6" stroke-width="2.5" stroke-linecap="round" stroke-linejoin="round"/></svg>
<svg style="left:1472.0px;top:174.0px;" width="56" height="56" viewBox="-28 -28 56 56" fill="none"><rect x="-14.7" y="-14.7" width="12" height="11" rx="2.5" stroke="#ced0d6" stroke-width="2.5" stroke-linecap="round" stroke-linejoin="round"/><rect x="-14.7" y="3" width="12" height="11.5" rx="2.5" stroke="#ced0d6" stroke-width="2.5" stroke-linecap="round" stroke-linejoin="round"/><rect x="2.8" y="3" width="12" height="11.5" rx="2.5" stroke="#ced0d6" stroke-width="2.5" stroke-linecap="round" stroke-linejoin="round"/></svg>
<svg style="left:1482.8px;top:277.5px;" width="34.4" height="8" viewBox="0 0 34.4 8" fill="none"><circle cx="4.0" cy="4" r="3" fill="#ced0d6"/><circle cx="17.2" cy="4" r="3" fill="#ced0d6"/><circle cx="30.4" cy="4" r="3" fill="#ced0d6"/></svg>
<div style="left:1470px;top:1440px;width:60px;height:60px;border-radius:12px;background:#4b4e54"></div>
<svg style="left:1472.0px;top:1445.5px;" width="56" height="56" viewBox="-28 -28 56 56" fill="none"><path d="M0 -11.5 c5 0 9 4.5 9 11.5 c0 7 -4 12 -9 12 c-5 0 -9 -5 -9 -12 c0 -7 4 -11.5 9 -11.5 z" stroke="#ced0d6" stroke-width="2.5" stroke-linecap="round" stroke-linejoin="round"/><path d="M-9 -1.5 H-17 M9 -1.5 H17 M-9.5 -7 L-15.5 -11 M-8.5 6 L-15.5 10 M8.5 6 L15.5 10" stroke="#ced0d6" stroke-width="2.5" stroke-linecap="round" stroke-linejoin="round"/><path d="M-6 -10.5 C-6 -15.5 -2 -18 2 -17" stroke="#ced0d6" stroke-width="2.5" stroke-linecap="round" stroke-linejoin="round"/><circle cx="13.2" cy="-16.5" r="8.8" fill="#4b4e54"/><circle cx="13.2" cy="-16.5" r="6.8" fill="#5fad65"/></svg>
<svg style="left:1472.0px;top:1522.0px;" width="56" height="56" viewBox="-28 -28 56 56" fill="none"><path d="M-16.5 -16.5 H2 C9 -16.5 14.5 -13 16.5 -7.5 C13 -10 9 -11 5 -10.5 V-7.5 H-6 V-10.5 H-16.5 Z" stroke="#ced0d6" stroke-width="2.5" stroke-linecap="round" stroke-linejoin="round"/><path d="M-4.8 -7 L-5.8 16 H5 L4 -7" stroke="#ced0d6" stroke-width="2.5" stroke-linecap="round" stroke-linejoin="round"/></svg>
<svg style="left:1472.0px;top:1602.0px;" width="56" height="56" viewBox="-28 -28 56 56" fill="none"><path d="M-11 -14.5 L14 0 L-11 14.5 Z" stroke="#ced0d6" stroke-width="2.5" stroke-linecap="round" stroke-linejoin="round"/></svg>
<svg style="left:1472.0px;top:1682.0px;" width="56" height="56" viewBox="-28 -28 56 56" fill="none"><path d="M-9.5 -16 H9.5 L18.5 0 L9.5 16 H-9.5 L-18.5 0 Z" stroke="#ced0d6" stroke-width="2.5" stroke-linecap="round" stroke-linejoin="round"/><path d="M-5 -9.5 L9.5 0 L-5 9.5 Z" stroke="#ced0d6" stroke-width="2.5" stroke-linecap="round" stroke-linejoin="round"/></svg>
<svg style="left:1472.0px;top:1762.0px;" width="56" height="56" viewBox="-28 -28 56 56" fill="none"><rect x="-16.7" y="-14.7" width="33.4" height="29.4" rx="3" stroke="#ced0d6" stroke-width="2.5" stroke-linecap="round" stroke-linejoin="round"/><path d="M-9 -8 L-2.5 -2 L-9 4 M0 5.5 H8.5" stroke="#ced0d6" stroke-width="2.5" stroke-linecap="round" stroke-linejoin="round"/></svg>
<svg style="left:1472.0px;top:1842.0px;" width="56" height="56" viewBox="-28 -28 56 56" fill="none"><circle cx="0" cy="0" r="16.6" stroke="#ced0d6" stroke-width="2.5" stroke-linecap="round" stroke-linejoin="round"/><path d="M0 -9 V1.5" stroke="#ced0d6" stroke-width="2.8" stroke-linecap="round" stroke-linejoin="round"/><circle cx="0" cy="8" r="2" fill="#ced0d6"/></svg>
<svg style="left:1472.0px;top:1922.0px;" width="56" height="56" viewBox="-28 -28 56 56" fill="none"><circle cx="-8.9" cy="-11.6" r="5.6" stroke="#ced0d6" stroke-width="2.5" stroke-linecap="round" stroke-linejoin="round"/><circle cx="8" cy="-7.6" r="5.6" stroke="#ced0d6" stroke-width="2.5" stroke-linecap="round" stroke-linejoin="round"/><path d="M-8.9 -6 V16.5 M8 -2 C8 5 4 7 -2 7 H-8.9" stroke="#ced0d6" stroke-width="2.5" stroke-linecap="round" stroke-linejoin="round"/></svg>
<svg style="left:3292.0px;top:93.0px;" width="56" height="56" viewBox="-28 -28 56 56" fill="none"><path d="M-16 11.5 C-12.5 7.5 -11.5 4 -11.5 -4 C-11.5 -12 -6.5 -17 0 -17 C6.5 -17 11.5 -12 11.5 -4 C11.5 4 12.5 7.5 16 11.5 Z" stroke="#ced0d6" stroke-width="2.5" stroke-linecap="round" stroke-linejoin="round"/><path d="M-4 15.5 Q0 19 4 15.5 Z" fill="#ced0d6" stroke="#ced0d6" stroke-width="1.5" stroke-linejoin="round"/><circle cx="13.5" cy="-13" r="9" fill="#2b2d30"/><circle cx="13.5" cy="-13" r="7" fill="#548af7"/></svg>
<svg style="left:3292.0px;top:174.0px;" width="56" height="56" viewBox="-28 -28 56 56" fill="none"><ellipse cx="0" cy="-11" rx="15" ry="6" stroke="#ced0d6" stroke-width="2.5" stroke-linecap="round" stroke-linejoin="round"/><path d="M-15 -11 V11 C-15 14.5 -8 17 0 17 C8 17 15 14.5 15 11 V-11" stroke="#ced0d6" stroke-width="2.5" stroke-linecap="round" stroke-linejoin="round"/><path d="M-15 -3.5 C-15 0 -8 2.5 0 2.5 C8 2.5 15 0 15 -3.5 M-15 4 C-15 7.5 -8 10 0 10 C8 10 15 7.5 15 4" stroke="#ced0d6" stroke-width="2.5" stroke-linecap="round" stroke-linejoin="round"/></svg>
<svg style="left:1590.0px;top:94.0px;" width="56" height="56" viewBox="-28 -28 56 56" fill="none"><path d="M0 -14.5 L12.6 -7.2 V7.2 L0 14.5 L-12.6 7.2 V-7.2 Z" stroke="#9b6bdf" stroke-width="2" fill="#2d2636" stroke-linejoin="round"/><path d="M4.4 -4.2 A6.1 6.1 0 1 0 4.4 4.2" stroke="#9b6bdf" stroke-width="2" stroke-linecap="round"/></svg>
<svg style="left:1778.0px;top:94.0px;" width="56" height="56" viewBox="-28 -28 56 56" fill="none"><path d="M0 -14.5 L12.6 -7.2 V7.2 L0 14.5 L-12.6 7.2 V-7.2 Z" stroke="#b07cf2" stroke-width="2" fill="#2d2636" stroke-linejoin="round"/><path d="M4.4 -4.2 A6.1 6.1 0 1 0 4.4 4.2" stroke="#b07cf2" stroke-width="2" stroke-linecap="round"/></svg>
<svg style="left:1596.0px;top:752.0px;" width="56" height="56" viewBox="-28 -28 56 56" fill="none"><path d="M-10 4.2 H1 M-4.3 -1.3 L1.5 4.2 L-4.3 9.7" stroke="#db5c5c" stroke-width="1.9" stroke-linecap="round" stroke-linejoin="round"/><path d="M9.7 -4.3 H-1 M4.3 -9.8 L-1.5 -4.3 L4.3 1.2" stroke="#5fad65" stroke-width="1.9" stroke-linecap="round" stroke-linejoin="round"/></svg>
<svg style="left:1550.0px;top:1212.0px;" width="56" height="56" viewBox="-28 -28 56 56" fill="none"><rect x="-11" y="-11" width="22" height="22" rx="3" stroke="#db5c5c" stroke-width="2" fill="#402929"/><path d="M3.8 -6.3 C0.3 -7.3 -1.3 -5.8 -1.3 -3.3 V7 M-4.8 -1.3 H3" stroke="#db5c5c" stroke-width="2" stroke-linecap="round"/></svg>
<svg style="left:1712.0px;top:1279.0px;" width="56" height="56" viewBox="-28 -28 56 56" fill="none"><rect x="-13.8" y="-12" width="27.6" height="24" rx="3.5" stroke="#548af7" stroke-width="2.2" fill="#25324d"/><path d="M-8.5 -5 H-4.5 M-2 -5 H2" stroke="#548af7" stroke-width="2"/><circle cx="10.6" cy="-10.5" r="7.8" fill="#2b2d30"/><circle cx="10.6" cy="-10.5" r="6" fill="#5fad65"/></svg>
<svg style="left:1990.5px;top:1354.5px;" width="56" height="56" viewBox="-28 -28 56 56" fill="none"><path d="M10.6 -5.4 A11.2 11.2 0 1 0 -0.3 10.9" stroke="#ced0d6" stroke-width="2.2" stroke-linecap="round" stroke-linejoin="round" stroke-linecap="butt"/><path d="M2.3 -5.2 H11.2 V-14.3" stroke="#ced0d6" stroke-width="2.2" stroke-linecap="butt" stroke-linejoin="miter"/><path d="M4 5.8 L0.8 3.9 M12 5.8 L15.2 3.9 M4.8 13 L0.8 15 M11.2 13 L15.2 15" stroke="#5fad65" stroke-width="2" stroke-linecap="round"/><path d="M4.4 5.5 A3.6 3.9 0 0 1 11.6 5.5" stroke="#5fad65" stroke-width="2"/><circle cx="8" cy="9.4" r="4.7" stroke="#5fad65" stroke-width="2" fill="#253627"/></svg>
<svg style="left:2042.0px;top:1354.0px;" width="56" height="56" viewBox="-28 -28 56 56" fill="none"><rect x="-11.5" y="-11.5" width="23" height="23" rx="4" stroke="#db5c5c" stroke-width="2.2" fill="#5e3838"/></svg>
<div style="left:2102px;top:1362px;width:2px;height:40px;background:#43454a;"></div>
<svg style="left:2107.0px;top:1354.0px;" width="56" height="56" viewBox="-28 -28 56 56" fill="none"><rect x="-13" y="-10.5" width="6.5" height="21.5" rx="1.5" stroke="#4e5157" stroke-width="2" fill="none"/><path d="M-0.5 -10.5 L14 0.3 L-0.5 11 Z" stroke="#4e5157" stroke-width="2" fill="none" stroke-linejoin="round"/></svg>
<svg style="left:2160.0px;top:1354.0px;" width="56" height="56" viewBox="-28 -28 56 56" fill="none"><rect x="-9.5" y="-10.5" width="6.5" height="21.5" rx="1" stroke="#ced0d6" stroke-width="2" fill="none"/><rect x="3" y="-10.5" width="6.5" height="21.5" rx="1" stroke="#ced0d6" stroke-width="2" fill="none"/></svg>
<svg style="left:2212.0px;top:1354.0px;" width="56" height="56" viewBox="-28 -28 56 56" fill="none"><path d="M-11.5 1.5 L0 -7.5 L11 3" stroke="#4e5157" stroke-width="2.2" stroke-linecap="round" stroke-linejoin="round"/><path d="M11.5 -6 V3.5 H2.5" stroke="#4e5157" stroke-width="2.2" stroke-linecap="round" stroke-linejoin="round"/><path d="M-12 13 H12" stroke="#4e5157" stroke-width="2.2" stroke-linecap="round" stroke-linejoin="round"/></svg>
<svg style="left:2264.0px;top:1354.0px;" width="56" height="56" viewBox="-28 -28 56 56" fill="none"><path d="M0 -12 V7 M-9.5 -2 L0 7.5 L9.5 -2" stroke="#4e5157" stroke-width="2.2" stroke-linecap="round" stroke-linejoin="round"/><path d="M-12 13 H12" stroke="#4e5157" stroke-width="2.2" stroke-linecap="round" stroke-linejoin="round"/></svg>
<svg style="left:2315.0px;top:1354.0px;" width="56" height="56" viewBox="-28 -28 56 56" fill="none"><path d="M0 7.5 V-11.5 M-9.5 -2.5 L0 -12 L9.5 -2.5" stroke="#4e5157" stroke-width="2.2" stroke-linecap="round" stroke-linejoin="round"/><path d="M-12 13 H12" stroke="#4e5157" stroke-width="2.2" stroke-linecap="round" stroke-linejoin="round"/></svg>
<div style="left:2376px;top:1362px;width:2px;height:40px;background:#43454a;"></div>
<svg style="left:2382.0px;top:1354.0px;" width="56" height="56" viewBox="-28 -28 56 56" fill="none"><circle cx="5" cy="-4.3" r="8.8" stroke="#db5c5c" stroke-width="2.2" fill="#5e3030"/><circle cx="-4.3" cy="3.2" r="8.8" stroke="#db5c5c" stroke-width="2.2" fill="#5e3030"/></svg>
<div style="left:2440px;top:1360px;width:44px;height:44px;border-radius:7px;background:#4b4e54"></div>
<svg style="left:2434.0px;top:1354.0px;" width="56" height="56" viewBox="-28 -28 56 56" fill="none"><circle cx="0" cy="0" r="10.3" stroke="#db5c5c" stroke-width="2.2" fill="#5e3030"/><path d="M-11.5 11.5 L12 -11.5" stroke="#4b4e54" stroke-width="5.5"/><path d="M-11.5 11.5 L12 -11.5" stroke="#ced0d6" stroke-width="2.2" stroke-linecap="round" stroke-linejoin="round"/></svg>
<svg style="left:2510px;top:1368px;" width="8" height="28" viewBox="0 0 8 28" fill="none"><circle cx="4" cy="4" r="2.3" fill="#ced0d6"/><circle cx="4" cy="14" r="2.3" fill="#ced0d6"/><circle cx="4" cy="24" r="2.3" fill="#ced0d6"/></svg>
<svg style="left:3226.0px;top:1354.0px;" width="56" height="56" viewBox="-28 -28 56 56" fill="none"><rect x="-12.5" y="-11.5" width="25" height="23" rx="3.5" stroke="#ced0d6" stroke-width="2.2" stroke-linecap="round" stroke-linejoin="round"/><path d="M-2 -11.5 V11.5 M-2 0 H12.5" stroke="#ced0d6" stroke-width="2.2" stroke-linecap="round" stroke-linejoin="round"/></svg>
<svg style="left:1546.0px;top:1429.5px;" width="56" height="56" viewBox="-28 -28 56 56" fill="none"><path d="M-14 -8.5 H-4 M-14 0 H-4 M-14 9.5 H14 M7 -9.5 V5.5 M0.5 -0.5 L7 6 L13.5 -0.5" stroke="#65676c" stroke-width="2" stroke-linecap="butt" stroke-linejoin="miter"/></svg>
<svg style="left:1546.0px;top:1482.0px;" width="56" height="56" viewBox="-28 -28 56 56" fill="none"><path d="M-11.6 -7.4 H12 M-5 -8 C-5 -12.5 -2.5 -13 0.2 -13 C3 -13 5.5 -12.5 5.5 -8 M-9.5 -6 V9.5 C-9.5 12 -8 13.4 -5.5 13.4 H5.7 C8.2 13.4 9.7 12 9.7 9.5 V-6 M-3 -1.5 V7.5 M3.2 -1.5 V7.5" stroke="#ced0d6" stroke-width="2" stroke-linecap="round" stroke-linejoin="round"/></svg>
<svg style="left:1468.0px;top:1992.0px;" width="56" height="56" viewBox="-28 -28 56 56" fill="none"><rect x="-7" y="-7" width="14" height="14" rx="3" stroke="#548af7" stroke-width="2.4" fill="#25324d"/></svg>
<svg style="left:2208.0px;top:1991.0px;" width="56" height="56" viewBox="-28 -28 56 56" fill="none"><path d="M0 -14.5 L12.6 -7.2 V7.2 L0 14.5 L-12.6 7.2 V-7.2 Z" stroke="#a571e6" stroke-width="2" fill="#2d2636" stroke-linejoin="round"/><path d="M4.4 -4.2 A6.1 6.1 0 1 0 4.4 4.2" stroke="#a571e6" stroke-width="2" stroke-linecap="round"/><rect x="-13" y="-16" width="10" height="9" fill="#4aa8d8"/></svg>
<svg style="left:2578px;top:2005px" width="30" height="30" viewBox="-15 -15 30 30"><defs><linearGradient id="vg2593" x1="0" y1="0" x2="0.6" y2="1"><stop offset="0" stop-color="#3fdd55"/><stop offset="0.55" stop-color="#18b7a4"/><stop offset="1" stop-color="#1f6ff2"/></linearGradient></defs><path d="M-12.5 -12.7 H-4 L-3.4 2 L4.2 -12.7 H13 L-0.5 12.8 H-12 Z" fill="url(#vg2593)"/></svg>
<svg style="left:3282.0px;top:1991.0px;" width="56" height="56" viewBox="-28 -28 56 56" fill="none"><rect x="-10" y="-2.3" width="19.5" height="14.3" rx="3.5" stroke="#ced0d6" stroke-width="2.2" stroke-linecap="round" stroke-linejoin="round"/><path d="M4 -2.5 V-5 A5.2 5.2 0 0 1 14.4 -5 V-2" stroke="#ced0d6" stroke-width="2.2" stroke-linecap="round" stroke-linejoin="round"/><path d="M-0.3 2.3 V7.3" stroke="#ced0d6" stroke-width="2.2" stroke-linecap="round" stroke-linejoin="round"/></svg>
<div style="left:1460px;top:0px;width:70px;height:2050px;background:transparent;background:linear-gradient(90deg,rgba(0,0,0,.45),rgba(0,0,0,.18) 30%,rgba(0,0,0,0));"></div>
</div></div>
<div style="left:1460px;top:0;width:1900px;height:2048px;border-radius:20px;box-shadow:inset 0 0 0 1.5px rgba(255,255,255,.2), inset 0 2px 0 0 rgba(255,255,255,.3);"></div>
<div class="win" style="left:0;top:0;width:1458px;height:2048px;border-radius:20px;background:#2b2d30;box-shadow:0 0 0 1.5px #000;"><div style="left:0;top:0;width:3360px;height:2050px">
<div style="left:0px;top:0px;width:1458px;height:80px;background:#2b2d30;background:linear-gradient(90deg,#243b3b 0,#204241 160px,#1f4644 300px,#204341 520px,#233c3c 700px,rgba(40,52,53,0) 900px),#2b2d30;"></div>
<div style="left:0px;top:80px;width:1458px;height:2px;background:#1e1f22;"></div>
<div style="left:0px;top:82px;width:80px;height:1908px;background:#2b2d30;"></div>
<div style="left:80px;top:82px;width:1298px;height:1232px;background:#1e1f22;"></div>
<div style="left:80px;top:162px;width:1296px;height:2px;background:#393b40;"></div>
<div style="left:1376px;top:82px;width:2px;height:1908px;background:#1e1f22;"></div>
<div style="left:1378px;top:82px;width:80px;height:1908px;background:#2b2d30;"></div>
<div style="left:80px;top:1314px;width:1296px;height:2px;background:#1e1f22;"></div>
<div style="left:80px;top:1316px;width:1296px;height:674px;background:#2b2d30;"></div>
<div style="left:80px;top:1316px;width:2px;height:674px;background:#1e1f22;"></div>
<div style="left:0px;top:1990px;width:1458px;height:2px;background:#1e1f22;"></div>
<div style="left:0px;top:1992px;width:1458px;height:56px;background:#2b2d30;"></div>
<div style="left:27.5px;top:27.5px;width:25px;height:25px;border-radius:50%;background:#ed6a5e"></div>
<div style="left:67.5px;top:27.5px;width:25px;height:25px;border-radius:50%;background:#f5bf4f"></div>
<div style="left:107.5px;top:27.5px;width:25px;height:25px;border-radius:50%;background:#62c554"></div>
<div style="left:180px;top:20px;width:40px;height:40px;border-radius:7px;background:linear-gradient(45deg,#2d96d8,#2aa79a)"></div>
<span id="t25" class="t" style="left:191.5px;top:20.3px;line-height:40px;font-size:27px;color:#ffffff;">T</span>
<span id="t26" class="t" style="left:229.1px;top:20.8px;line-height:40px;font-size:27px;color:#dfe1e5;letter-spacing:1.62px;">test-jdk</span>
<svg style="left:340.5px;top:34.5px;" width="19" height="12" viewBox="0 0 19 12" fill="none"><path d="M2 2 L9.5 9.5 L17 2" stroke="#9da0a8" stroke-width="2" stroke-linecap="round" stroke-linejoin="round"/></svg>
<span id="t27" class="t" style="left:397.0px;top:20.8px;line-height:40px;font-size:27px;color:#dfe1e5;letter-spacing:0.64px;">Version control</span>
<svg style="left:596.5px;top:34.5px;" width="19" height="12" viewBox="0 0 19 12" fill="none"><path d="M2 2 L9.5 9.5 L17 2" stroke="#9da0a8" stroke-width="2" stroke-linecap="round" stroke-linejoin="round"/></svg>
<span id="t28" class="t" style="left:805.5px;top:20.8px;line-height:40px;font-size:27px;color:#dfe1e5;letter-spacing:1.57px;">test-jdk</span>
<svg style="left:914.5px;top:35.5px;" width="19" height="12" viewBox="0 0 19 12" fill="none"><path d="M2 2 L9.5 9.5 L17 2" stroke="#9da0a8" stroke-width="2" stroke-linecap="round" stroke-linejoin="round"/></svg>
<div style="left:1028px;top:10px;width:60px;height:60px;border-radius:11px;background:#57965c"></div>
<div style="left:1096px;top:10px;width:60px;height:60px;border-radius:11px;background:#c94f4f"></div>
<svg style="left:1110px;top:24px;" width="32" height="32" viewBox="0 0 32 32" fill="none"><rect x="2.5" y="2.5" width="27" height="27" rx="3" stroke="#eef0f3" stroke-width="2.6"/></svg>
<svg style="left:976px;top:22px;" width="32" height="36" viewBox="0 0 32 36" fill="none"><path d="M5 5.5 L26 18 L5 30.5 Z" stroke="#4e5157" stroke-width="2.6" stroke-linejoin="round"/></svg>
<svg style="left:1190px;top:25.4px;" width="8" height="29.2" viewBox="0 0 8 29.2" fill="none"><circle cx="4" cy="4.0" r="2.4" fill="#ced0d6"/><circle cx="4" cy="14.6" r="2.4" fill="#ced0d6"/><circle cx="4" cy="25.2" r="2.4" fill="#ced0d6"/></svg>
<svg style="left:106.5px;top:115.0px;" width="15" height="15" viewBox="0 0 15 15" fill="none"><path d="M1 1 L14 14 M14 1 L1 14" stroke="#868a91" stroke-width="1.8" stroke-linecap="round"/></svg>
<span id="t29" class="t" style="left:183.5px;top:102.8px;line-height:40px;font-size:27px;color:#dfe1e5;letter-spacing:0.18px;">Main.java</span>
<div style="left:82px;top:158px;width:238px;height:5px;border-radius:3px;background:#5a5d63"></div>
<svg style="left:1334px;top:108.4px;" width="8" height="27.2" viewBox="0 0 8 27.2" fill="none"><circle cx="4" cy="4.0" r="2.2" fill="#ced0d6"/><circle cx="4" cy="13.6" r="2.2" fill="#ced0d6"/><circle cx="4" cy="23.2" r="2.2" fill="#ced0d6"/></svg>
<div style="left:210px;top:164px;width:2px;height:1150px;background:#313438;"></div>
<div style="left:82px;top:344px;width:128px;height:30px;background:#26282e;"></div>
<div style="left:212px;top:344px;width:1164px;height:30px;background:#2b4f91;"></div>
<div style="left:268px;top:314px;width:2px;height:240px;background:#393b40;"></div>
<div style="left:327px;top:374px;width:2px;height:30px;background:#393b40;"></div>
<div style="left:1348px;top:396px;width:28px;height:4px;background:#8f5f6e;"></div>
<div style="left:1348px;top:516px;width:28px;height:4px;background:#c9a53e;"></div>
<pre style="left:216px;top:166.5px;line-height:30px;font-size:25px;letter-spacing:-0.6px;"><span style="color:#cf8e6d;">package</span><span style="color:#bcbec4;"> org.example;</span></pre>
<pre style="left:216px;top:256.5px;line-height:30px;font-size:25px;letter-spacing:-0.6px;"><span style="color:#cf8e6d;">public class</span><span style="color:#bcbec4;"> Main {</span></pre>
<pre style="left:216px;top:286.5px;line-height:30px;font-size:25px;letter-spacing:-0.6px;"><span style="color:#cf8e6d;">    public static void </span><span style="color:#56a8f5;">main</span><span style="color:#bcbec4;">(String[] args) {</span><span style="color:#6f737a;font-style:italic;padding-left:5px;">  args: []</span></pre>
<pre style="left:216px;top:346.5px;line-height:30px;font-size:25px;letter-spacing:-0.6px;"><span style="color:#cf8e6d;">        for</span><span style="color:#bcbec4;"> (</span><span style="color:#cf8e6d;">int</span><span style="color:#bcbec4;"> </span><span style="color:#bcbec4;text-decoration:underline;text-decoration-thickness:2px;text-underline-offset:1.5px;">i</span><span style="color:#bcbec4;"> = </span><span style="color:#2aacb8;">0</span><span style="color:#bcbec4;">; </span><span style="color:#bcbec4;text-decoration:underline;text-decoration-thickness:2px;text-underline-offset:1.5px;">i</span><span style="color:#bcbec4;"> &lt; </span><span style="color:#2aacb8;">5</span><span style="color:#bcbec4;">; </span><span style="color:#bcbec4;text-decoration:underline;text-decoration-thickness:2px;text-underline-offset:1.5px;">i</span><span style="color:#bcbec4;">++) {</span><span style="color:#68728f;font-style:italic;padding-left:5px;">  i:</span><span style="color:#c9b84a;font-style:italic;"> 1</span></pre>
<pre style="left:216px;top:376.5px;line-height:30px;font-size:25px;letter-spacing:-0.6px;"><span style="color:#bcbec4;">            System.</span><span style="color:#c77dbb;font-style:italic;">out</span><span style="color:#bcbec4;">.println(</span><span style="color:#6aab73;">&quot;Hello world!&quot;</span><span style="color:#bcbec4;">);</span></pre>
<pre style="left:216px;top:406.5px;line-height:30px;font-size:25px;letter-spacing:-0.6px;"><span style="color:#bcbec4;">        }</span></pre>
<pre style="left:216px;top:466.5px;line-height:30px;font-size:25px;letter-spacing:-0.6px;"><span style="color:#bcbec4;">        Main main = </span><span style="color:#cf8e6d;">new</span><span style="color:#bcbec4;"> </span><span style="color:#bcbec4;text-decoration:underline wavy #c9a53e;text-decoration-thickness:1.2px;text-underline-offset:2.5px;">Main</span><span style="color:#bcbec4;">();</span></pre>
<pre style="left:216px;top:496.5px;line-height:30px;font-size:25px;letter-spacing:-0.6px;"><span style="color:#bcbec4;">        String name = main.getClass().getName();</span></pre>
<pre style="left:216px;top:526.5px;line-height:30px;font-size:25px;letter-spacing:-0.6px;"><span style="color:#bcbec4;">        System.</span><span style="color:#c77dbb;font-style:italic;">out</span><span style="color:#bcbec4;">.println(name);</span></pre>
<pre style="left:216px;top:556.5px;line-height:30px;font-size:25px;letter-spacing:-0.6px;"><span style="color:#bcbec4;">    }</span></pre>
<pre style="left:216px;top:586.5px;line-height:30px;font-size:25px;letter-spacing:-0.6px;"><span style="color:#bcbec4;">}</span></pre>
<pre style="left:55px;width:80px;text-align:right;top:166.2px;line-height:30px;font-size:22px;letter-spacing:0;-webkit-text-stroke:0.15px;color:#4b5059">1</pre>
<pre style="left:55px;width:80px;text-align:right;top:196.2px;line-height:30px;font-size:22px;letter-spacing:0;-webkit-text-stroke:0.15px;color:#4b5059">2</pre>
<pre style="left:55px;width:80px;text-align:right;top:226.2px;line-height:30px;font-size:22px;letter-spacing:0;-webkit-text-stroke:0.15px;color:#4b5059">3</pre>
<pre style="left:55px;width:80px;text-align:right;top:256.2px;line-height:30px;font-size:22px;letter-spacing:0;-webkit-text-stroke:0.15px;color:#4b5059">4</pre>
<pre style="left:55px;width:80px;text-align:right;top:286.2px;line-height:30px;font-size:22px;letter-spacing:0;-webkit-text-stroke:0.15px;color:#4b5059">5</pre>
<pre style="left:55px;width:80px;text-align:right;top:316.2px;line-height:30px;font-size:22px;letter-spacing:0;-webkit-text-stroke:0.15px;color:#4b5059">6</pre>
<pre style="left:55px;width:80px;text-align:right;top:376.2px;line-height:30px;font-size:22px;letter-spacing:0;-webkit-text-stroke:0.15px;color:#4b5059">8</pre>
<pre style="left:55px;width:80px;text-align:right;top:406.2px;line-height:30px;font-size:22px;letter-spacing:0;-webkit-text-stroke:0.15px;color:#4b5059">9</pre>
<pre style="left:55px;width:80px;text-align:right;top:436.2px;line-height:30px;font-size:22px;letter-spacing:0;-webkit-text-stroke:0.15px;color:#4b5059">10</pre>
<pre style="left:55px;width:80px;text-align:right;top:466.2px;line-height:30px;font-size:22px;letter-spacing:0;-webkit-text-stroke:0.15px;color:#4b5059">11</pre>
<pre style="left:55px;width:80px;text-align:right;top:496.2px;line-height:30px;font-size:22px;letter-spacing:0;-webkit-text-stroke:0.15px;color:#4b5059">12</pre>
<pre style="left:55px;width:80px;text-align:right;top:526.2px;line-height:30px;font-size:22px;letter-spacing:0;-webkit-text-stroke:0.15px;color:#4b5059">13</pre>
<pre style="left:55px;width:80px;text-align:right;top:556.2px;line-height:30px;font-size:22px;letter-spacing:0;-webkit-text-stroke:0.15px;color:#4b5059">14</pre>
<pre style="left:55px;width:80px;text-align:right;top:586.2px;line-height:30px;font-size:22px;letter-spacing:0;-webkit-text-stroke:0.15px;color:#4b5059">15</pre>
<svg style="left:147px;top:256px;" width="26" height="26" viewBox="0 0 26 26" fill="none"><path d="M3.5 3 L22.5 12.6 L3.5 22.5 Z" fill="#253627" stroke="#57965c" stroke-width="2" stroke-linejoin="round"/></svg>
<svg style="left:147px;top:286px;" width="26" height="26" viewBox="0 0 26 26" fill="none"><path d="M3.5 3 L22.5 12.6 L3.5 22.5 Z" fill="#253627" stroke="#57965c" stroke-width="2" stroke-linejoin="round"/></svg>
<div style="left:112px;top:346.5px;width:23px;height:23px;border-radius:50%;background:#e55765"></div>
<svg style="left:120px;top:342px;" width="20" height="16" viewBox="0 0 20 16" fill="none"><path d="M4.3 8.3 L8.3 12 L14.3 4.8" stroke="#3a2c33" stroke-width="5" stroke-linecap="round" stroke-linejoin="round"/><path d="M4.3 8.3 L8.3 12 L14.3 4.8" stroke="#eef0f3" stroke-width="2.1" stroke-linecap="round" stroke-linejoin="round"/></svg>
<svg style="left:1240px;top:177px;" width="26" height="24" viewBox="0 0 26 24" fill="none"><path d="M13 2.5 L24 21.5 H2 Z" fill="#c9a53e" stroke="#c9a53e" stroke-width="2" stroke-linejoin="round"/><rect x="11.7" y="8" width="2.6" height="7.5" rx="1" fill="#1e1f22"/><circle cx="13" cy="18.6" r="1.5" fill="#1e1f22"/></svg>
<span id="t30" class="t" style="left:1269.5px;top:170.8px;line-height:40px;font-size:25px;color:#bcbec4;">1</span>
<svg style="left:1300.5px;top:184.0px;" width="19" height="12" viewBox="0 0 19 12" fill="none"><path d="M2 10 L9.5 2.5 L17 10" stroke="#9da0a8" stroke-width="2" stroke-linecap="round" stroke-linejoin="round"/></svg>
<svg style="left:1342.5px;top:184.0px;" width="19" height="12" viewBox="0 0 19 12" fill="none"><path d="M2 2 L9.5 9.5 L17 2" stroke="#9da0a8" stroke-width="2" stroke-linecap="round" stroke-linejoin="round"/></svg>
<span id="t31" class="t" style="left:104.5px;top:1337.8px;line-height:40px;font-size:27px;color:#dfe1e5;font-weight:700;letter-spacing:0.38px;">Debug</span>
<svg style="left:234.5px;top:1350.0px;" width="15" height="15" viewBox="0 0 15 15" fill="none"><path d="M1 1 L14 14 M14 1 L1 14" stroke="#868a91" stroke-width="1.8" stroke-linecap="round"/></svg>
<span id="t32" class="t" style="left:303.5px;top:1337.8px;line-height:40px;font-size:27px;color:#dfe1e5;letter-spacing:1.51px;">test-jdk</span>
<div style="left:220px;top:1392px;width:204px;height:5px;border-radius:3px;background:#5a5d63"></div>
<div style="left:82px;top:1396px;width:1294px;height:2px;background:#1e1f22;"></div>
<span id="t33" class="t" style="left:107.0px;top:1413.3px;line-height:40px;font-size:27px;color:#dfe1e5;letter-spacing:0.54px;">Console</span>
<span id="t34" class="t" style="left:259.5px;top:1413.3px;line-height:40px;font-size:27px;color:#dfe1e5;letter-spacing:0.63px;">Debugger</span>
<div style="left:234px;top:1463px;width:174px;height:4px;background:#5a5d63"></div>
<div style="left:82px;top:1467px;width:1294px;height:2px;background:#1e1f22;"></div>
<div style="left:82px;top:1469px;width:432px;height:55px;background:#393b40;"></div>
<div style="left:82px;top:1524px;width:432px;height:2px;background:#1e1f22;"></div>
<div style="left:82px;top:1534px;width:432px;height:48px;background:#2e436e;"></div>
<div style="left:514px;top:1469px;width:2px;height:521px;background:#1e1f22;"></div>
<span id="t35" class="t" style="left:136.5px;top:1477.3px;line-height:40px;font-size:27px;color:#dfe1e5;letter-spacing:-0.32px;">&quot;main&quot;@...RUNNING</span>
<span id="t36" class="t" style="left:133.0px;top:1540.3px;line-height:40px;font-size:27px;color:#dfe1e5;letter-spacing:0.19px;">main:7, Main <i>(org.example)</i></span>
<svg style="left:100px;top:1482px;" width="34" height="28" viewBox="0 0 34 28" fill="none"><path d="M4 15 L13 23.5 L29 5" stroke="#c7592a" stroke-width="5" stroke-linejoin="miter"/></svg>
<svg style="left:410px;top:1480px;" width="30" height="32" viewBox="0 0 30 32" fill="none"><path d="M3 4 H25 L17 15 V26 L11 23 V15 Z" stroke="#ced0d6" stroke-width="2" stroke-linejoin="round"/></svg>
<svg style="left:476.0px;top:1492.0px;" width="19" height="12" viewBox="0 0 19 12" fill="none"><path d="M2 2 L9.5 9.5 L17 2" stroke="#ced0d6" stroke-width="2" stroke-linecap="round" stroke-linejoin="round"/></svg>
<div style="left:584px;top:1486px;width:24px;height:24px;border-radius:50%;border:2px solid #c77d55;background:#45302a"></div>
<span id="t37" class="t" style="left:592.0px;top:1478.8px;line-height:40px;font-size:22px;color:#e08855;-webkit-text-stroke:0;">p</span>
<span id="t38" class="t" style="left:619.3px;top:1481.8px;line-height:40px;font-size:27px;color:#efa97a;letter-spacing:0.76px;">args</span>
<span id="t39" class="t" style="left:680.5px;top:1481.8px;line-height:40px;font-size:27px;color:#dfe1e5;">=</span>
<span id="t40" class="t" style="left:704.2px;top:1481.8px;line-height:40px;font-size:27px;color:#6f737a;letter-spacing:0.48px;">{String[0]@901}</span>
<span id="t41" class="t" style="left:909.5px;top:1481.8px;line-height:40px;font-size:27px;color:#dfe1e5;letter-spacing:0.6px;">[]</span>
<span id="t42" class="t" style="left:586.5px;top:1521.3px;line-height:40px;font-size:15px;color:#dfe1e5;font-weight:700;letter-spacing:2.8px;">10</span>
<span id="t43" class="t" style="left:586.5px;top:1536.8px;line-height:40px;font-size:15px;color:#dfe1e5;font-weight:700;letter-spacing:2.8px;">01</span>
<span id="t44" class="t" style="left:620.0px;top:1528.8px;line-height:40px;font-size:27px;color:#efa97a;">i</span>
<span id="t45" class="t" style="left:633.5px;top:1528.8px;line-height:40px;font-size:27px;color:#dfe1e5;letter-spacing:-0.80px;">= 1</span>
<div style="left:1196px;top:1469px;width:2px;height:521px;background:#1e1f22;"></div>
<div style="left:1198px;top:1516px;width:178px;height:2px;background:#1e1f22;"></div>
<div style="left:1198px;top:1518px;width:178px;height:56px;background:#393b40;"></div>
<div style="left:1198px;top:1574px;width:178px;height:2px;background:#1e1f22;"></div>
<svg style="left:1209px;top:1478px;" width="28" height="28" viewBox="0 0 28 28" fill="none"><path d="M14 2 V26 M2 14 H26" stroke="#ced0d6" stroke-width="2.2" stroke-linecap="round"/></svg>
<div style="left:1262px;top:1490.5px;width:26px;height:2px;background:#5a5d63;"></div>
<svg style="left:1351.0px;top:1482.5px;" width="12" height="19" viewBox="0 0 12 19" fill="none"><path d="M2 2 L9.5 9.5 L2 17" stroke="#ced0d6" stroke-width="2" stroke-linecap="round" stroke-linejoin="round"/></svg>
<div style="left:1219.5px;top:1549px;width:3px;height:3px;background:#6f737a;"></div>
<svg style="left:1271px;top:1530px;" width="34" height="32" viewBox="0 0 34 32" fill="none"><path d="M3 14 H29 M16 3 V20" stroke="#5a5d63" stroke-width="2"/><circle cx="15" cy="26" r="3.5" stroke="#5a5d63" stroke-width="2"/><circle cx="25" cy="26" r="3.5" stroke="#5a5d63" stroke-width="2"/></svg>
<svg style="left:1338.0px;top:1542.0px;" width="19" height="12" viewBox="0 0 19 12" fill="none"><path d="M2 2 L9.5 9.5 L17 2" stroke="#ced0d6" stroke-width="2" stroke-linecap="round" stroke-linejoin="round"/></svg>
<span id="t46" class="t" style="left:1211.5px;top:1701.3px;line-height:40px;font-size:27px;color:#6f737a;letter-spacing:0.66px;">No watches</span>
<span id="t47" class="t" style="left:97.5px;top:1948.3px;line-height:40px;font-size:23px;color:#6f737a;letter-spacing:0.29px;">Switch frames from anywhere in t...</span>
<svg style="left:483.0px;top:1961.0px;" width="14" height="14" viewBox="0 0 14 14" fill="none"><path d="M1 1 L13 13 M13 1 L1 13" stroke="#868a91" stroke-width="1.8" stroke-linecap="round"/></svg>
<span id="t48" class="t" style="left:17.0px;top:1999.3px;line-height:40px;font-size:27px;color:#a4a7ae;letter-spacing:1.35px;">test-jdk</span>
<div style="left:2px;top:2000px;width:17.7px;height:40px;background:#2b2d30;"></div>
<svg style="left:131.5px;top:2010.5px;" width="11" height="17" viewBox="0 0 11 17" fill="none"><path d="M2 2 L8.5 8.5 L2 15" stroke="#868a91" stroke-width="2" stroke-linecap="round" stroke-linejoin="round"/></svg>
<svg style="left:217.5px;top:2010.5px;" width="11" height="17" viewBox="0 0 11 17" fill="none"><path d="M2 2 L8.5 8.5 L2 15" stroke="#868a91" stroke-width="2" stroke-linecap="round" stroke-linejoin="round"/></svg>
<svg style="left:325.5px;top:2010.5px;" width="11" height="17" viewBox="0 0 11 17" fill="none"><path d="M2 2 L8.5 8.5 L2 15" stroke="#868a91" stroke-width="2" stroke-linecap="round" stroke-linejoin="round"/></svg>
<svg style="left:424.5px;top:2010.5px;" width="11" height="17" viewBox="0 0 11 17" fill="none"><path d="M2 2 L8.5 8.5 L2 15" stroke="#868a91" stroke-width="2" stroke-linecap="round" stroke-linejoin="round"/></svg>
<svg style="left:514.5px;top:2010.5px;" width="11" height="17" viewBox="0 0 11 17" fill="none"><path d="M2 2 L8.5 8.5 L2 15" stroke="#868a91" stroke-width="2" stroke-linecap="round" stroke-linejoin="round"/></svg>
<svg style="left:665.5px;top:2010.5px;" width="11" height="17" viewBox="0 0 11 17" fill="none"><path d="M2 2 L8.5 8.5 L2 15" stroke="#868a91" stroke-width="2" stroke-linecap="round" stroke-linejoin="round"/></svg>
<span id="t49" class="t" style="left:161.5px;top:1999.3px;line-height:40px;font-size:27px;color:#a4a7ae;letter-spacing:1.50px;">src</span>
<span id="t50" class="t" style="left:246.5px;top:1999.3px;line-height:40px;font-size:27px;color:#a4a7ae;letter-spacing:0.82px;">main</span>
<span id="t51" class="t" style="left:354.5px;top:1999.3px;line-height:40px;font-size:27px;color:#a4a7ae;letter-spacing:0.82px;">java</span>
<span id="t52" class="t" style="left:452.5px;top:1999.3px;line-height:40px;font-size:27px;color:#a4a7ae;letter-spacing:1.98px;">org</span>
<span id="t53" class="t" style="left:542.5px;top:1999.3px;line-height:40px;font-size:27px;color:#a4a7ae;letter-spacing:0.66px;">example</span>
<span id="t54" class="t" style="left:734.5px;top:1999.3px;line-height:40px;font-size:27px;color:#a4a7ae;letter-spacing:1.16px;">Main</span>
<span id="t55" class="t" style="left:940.5px;top:1999.3px;line-height:40px;font-size:27px;color:#a4a7ae;letter-spacing:-0.77px;">7:1</span>
<span id="t56" class="t" style="left:1070.5px;top:1999.3px;line-height:40px;font-size:27px;color:#a4a7ae;letter-spacing:0.48px;">LF</span>
<span id="t57" class="t" style="left:1132.5px;top:1999.3px;line-height:40px;font-size:27px;color:#a4a7ae;letter-spacing:1.12px;">UTF-8</span>
<span id="t58" class="t" style="left:1244.5px;top:1999.3px;line-height:40px;font-size:27px;color:#a4a7ae;letter-spacing:0.85px;">4 spaces</span>
<svg style="left:12.0px;top:94.0px;" width="56" height="56" viewBox="-28 -28 56 56" fill="none"><path d="M-16.7 -10.5 q0 -3.2 3.2 -3.2 h8.7 l5.3 5.3 h13 q3.2 0 3.2 3.2 v15.7 q0 3.2 -3.2 3.2 h-27 q-3.2 0 -3.2 -3.2 z" stroke="#ced0d6" stroke-width="2.5" stroke-linecap="round" stroke-linejoin="round"/></svg>
<div style="left:16px;top:172px;width:48px;height:2px;background:#43454a;"></div>
<svg style="left:12.0px;top:198.0px;" width="56" height="56" viewBox="-28 -28 56 56" fill="none"><path d="M-20 0 L-6 -8 L-9 3 Z" fill="#6ea42e"/><path d="M-5 12 L3 3 L-8 2 Z" fill="#6ea42e"/><path d="M20 -22 C10 -22 0 -17 -7 -8 C-10 -4 -12 2 -11 5 C-8 8 -3 7 1 5 C11 -1 19 -10 20 -22 Z" fill="#86bf3c"/><circle cx="6" cy="-9" r="3.2" fill="#e6f0d8"/><text x="2.5" y="17" font-family="Liberation Sans, sans-serif" font-weight="700" font-size="19" fill="#ffffff" textLength="18" lengthAdjust="spacingAndGlyphs">JR</text></svg>
<svg style="left:12.0px;top:276.0px;" width="56" height="56" viewBox="-28 -28 56 56" fill="none"><rect x="-14.7" y="-14.7" width="12" height="11" rx="2.5" stroke="#ced0d6" stroke-width="2.5" stroke-linecap="round" stroke-linejoin="round"/><rect x="-14.7" y="3" width="12" height="11.5" rx="2.5" stroke="#ced0d6" stroke-width="2.5" stroke-linecap="round" stroke-linejoin="round"/><rect x="2.8" y="3" width="12" height="11.5" rx="2.5" stroke="#ced0d6" stroke-width="2.5" stroke-linecap="round" stroke-linejoin="round"/></svg>
<svg style="left:22.8px;top:379.5px;" width="34.4" height="8" viewBox="0 0 34.4 8" fill="none"><circle cx="4.0" cy="4" r="3" fill="#ced0d6"/><circle cx="17.2" cy="4" r="3" fill="#ced0d6"/><circle cx="30.4" cy="4" r="3" fill="#ced0d6"/></svg>
<div style="left:10px;top:1440px;width:60px;height:60px;border-radius:12px;background:#4b4e54"></div>
<svg style="left:12.0px;top:1445.5px;" width="56" height="56" viewBox="-28 -28 56 56" fill="none"><path d="M0 -11.5 c5 0 9 4.5 9 11.5 c0 7 -4 12 -9 12 c-5 0 -9 -5 -9 -12 c0 -7 4 -11.5 9 -11.5 z" stroke="#ced0d6" stroke-width="2.5" stroke-linecap="round" stroke-linejoin="round"/><path d="M-9 -1.5 H-17 M9 -1.5 H17 M-9.5 -7 L-15.5 -11 M-8.5 6 L-15.5 10 M8.5 6 L15.5 10" stroke="#ced0d6" stroke-width="2.5" stroke-linecap="round" stroke-linejoin="round"/><path d="M-6 -10.5 C-6 -15.5 -2 -18 2 -17" stroke="#ced0d6" stroke-width="2.5" stroke-linecap="round" stroke-linejoin="round"/><circle cx="13.2" cy="-16.5" r="8.8" fill="#4b4e54"/><circle cx="13.2" cy="-16.5" r="6.8" fill="#5fad65"/></svg>
<svg style="left:12.0px;top:1522.0px;" width="56" height="56" viewBox="-28 -28 56 56" fill="none"><path d="M-16.5 -16.5 H2 C9 -16.5 14.5 -13 16.5 -7.5 C13 -10 9 -11 5 -10.5 V-7.5 H-6 V-10.5 H-16.5 Z" stroke="#ced0d6" stroke-width="2.5" stroke-linecap="round" stroke-linejoin="round"/><path d="M-4.8 -7 L-5.8 16 H5 L4 -7" stroke="#ced0d6" stroke-width="2.5" stroke-linecap="round" stroke-linejoin="round"/></svg>
<svg style="left:12.0px;top:1602.0px;" width="56" height="56" viewBox="-28 -28 56 56" fill="none"><path d="M-9.5 -16 H9.5 L18.5 0 L9.5 16 H-9.5 L-18.5 0 Z" stroke="#ced0d6" stroke-width="2.5" stroke-linecap="round" stroke-linejoin="round"/><path d="M-5 -9.5 L9.5 0 L-5 9.5 Z" stroke="#ced0d6" stroke-width="2.5" stroke-linecap="round" stroke-linejoin="round"/></svg>
<svg style="left:12.0px;top:1682.0px;" width="56" height="56" viewBox="-28 -28 56 56" fill="none"><rect x="-5.5" y="-15.5" width="11" height="31" stroke="#ced0d6" stroke-width="2.5" stroke-linecap="round" stroke-linejoin="round"/><path d="M-19 -10 H-8 M-12.5 -14.5 L-8 -10 L-12.5 -5.5 M8 9.5 H18.5 M14 5 L18.5 9.5 L14 14" stroke="#ced0d6" stroke-width="2.5" stroke-linecap="round" stroke-linejoin="round"/></svg>
<svg style="left:12.0px;top:1762.0px;" width="56" height="56" viewBox="-28 -28 56 56" fill="none"><rect x="-16.7" y="-14.7" width="33.4" height="29.4" rx="3" stroke="#ced0d6" stroke-width="2.5" stroke-linecap="round" stroke-linejoin="round"/><path d="M-9 -8 L-2.5 -2 L-9 4 M0 5.5 H8.5" stroke="#ced0d6" stroke-width="2.5" stroke-linecap="round" stroke-linejoin="round"/></svg>
<svg style="left:12.0px;top:1842.0px;" width="56" height="56" viewBox="-28 -28 56 56" fill="none"><circle cx="0" cy="0" r="16.6" stroke="#ced0d6" stroke-width="2.5" stroke-linecap="round" stroke-linejoin="round"/><path d="M0 -9 V1.5" stroke="#ced0d6" stroke-width="2.8" stroke-linecap="round" stroke-linejoin="round"/><circle cx="0" cy="8" r="2" fill="#ced0d6"/></svg>
<svg style="left:12.0px;top:1922.0px;" width="56" height="56" viewBox="-28 -28 56 56" fill="none"><circle cx="-8.9" cy="-11.6" r="5.6" stroke="#ced0d6" stroke-width="2.5" stroke-linecap="round" stroke-linejoin="round"/><circle cx="8" cy="-7.6" r="5.6" stroke="#ced0d6" stroke-width="2.5" stroke-linecap="round" stroke-linejoin="round"/><path d="M-8.9 -6 V16.5 M8 -2 C8 5 4 7 -2 7 H-8.9" stroke="#ced0d6" stroke-width="2.5" stroke-linecap="round" stroke-linejoin="round"/></svg>
<svg style="left:1390.0px;top:93.0px;" width="56" height="56" viewBox="-28 -28 56 56" fill="none"><path d="M-16 11.5 C-12.5 7.5 -11.5 4 -11.5 -4 C-11.5 -12 -6.5 -17 0 -17 C6.5 -17 11.5 -12 11.5 -4 C11.5 4 12.5 7.5 16 11.5 Z" stroke="#ced0d6" stroke-width="2.5" stroke-linecap="round" stroke-linejoin="round"/><path d="M-4 15.5 Q0 19 4 15.5 Z" fill="#ced0d6" stroke="#ced0d6" stroke-width="1.5" stroke-linejoin="round"/></svg>
<svg style="left:1390.0px;top:174.0px;" width="56" height="56" viewBox="-28 -28 56 56" fill="none"><ellipse cx="0" cy="-11" rx="15" ry="6" stroke="#ced0d6" stroke-width="2.5" stroke-linecap="round" stroke-linejoin="round"/><path d="M-15 -11 V11 C-15 14.5 -8 17 0 17 C8 17 15 14.5 15 11 V-11" stroke="#ced0d6" stroke-width="2.5" stroke-linecap="round" stroke-linejoin="round"/><path d="M-15 -3.5 C-15 0 -8 2.5 0 2.5 C8 2.5 15 0 15 -3.5 M-15 4 C-15 7.5 -8 10 0 10 C8 10 15 7.5 15 4" stroke="#ced0d6" stroke-width="2.5" stroke-linecap="round" stroke-linejoin="round"/></svg>
<span id="t59" class="t" style="left:1398.5px;top:261.8px;line-height:40px;font-size:50px;color:#ced0d6;font-style:italic;-webkit-text-stroke:0;">m</span>
<svg style="left:1390.0px;top:334.0px;" width="56" height="56" viewBox="-28 -28 56 56" fill="none"><circle cx="0" cy="0" r="16.2" stroke="#ced0d6" stroke-width="2.5" stroke-linecap="round" stroke-linejoin="round"/><circle cx="-5.2" cy="-5" r="2.4" fill="#ced0d6"/><circle cx="-5.2" cy="5" r="2.4" fill="#ced0d6"/><circle cx="5.2" cy="-5" r="2.4" fill="#ced0d6"/><circle cx="5.2" cy="5" r="2.4" fill="#ced0d6"/></svg>
<div style="left:1394px;top:412.5px;width:48px;height:2px;background:#43454a;"></div>
<svg style="left:1390.0px;top:436.5px;" width="56" height="56" viewBox="-28 -28 56 56" fill="none"><path d="M14.5 -18.5 H-10 Q-14.7 -18.5 -14.7 -14 V14 Q-14.7 18.5 -10 18.5 H14.5 V-9.5 H-10 Q-14.7 -9.5 -14.7 -14" stroke="#ced0d6" stroke-width="2.5" stroke-linecap="round" stroke-linejoin="round"/><path d="M-10 -14 H14.5" stroke="#ced0d6" stroke-width="2" stroke-linecap="round" stroke-linejoin="round"/><path d="M-5 11 L0 -3 L5 11 M-3 6.5 H3" stroke="#ced0d6" stroke-width="2.2" stroke-linecap="round" stroke-linejoin="round"/></svg>
<svg style="left:1390.0px;top:1926.0px;" width="56" height="56" viewBox="-28 -28 56 56" fill="none"><path d="M-20 0 L-6 -8 L-9 3 Z" fill="#7d8086"/><path d="M-5 12 L3 3 L-8 2 Z" fill="#7d8086"/><path d="M20 -22 C10 -22 0 -17 -7 -8 C-10 -4 -12 2 -11 5 C-8 8 -3 7 1 5 C11 -1 19 -10 20 -22 Z" fill="#9a9da3"/><circle cx="6" cy="-9" r="3.2" fill="#e6f0d8"/><text x="2.5" y="17" font-family="Liberation Sans, sans-serif" font-weight="700" font-size="19" fill="#ffffff" textLength="18" lengthAdjust="spacingAndGlyphs">JR</text></svg>
<svg style="left:404.0px;top:1404.5px;" width="56" height="56" viewBox="-28 -28 56 56" fill="none"><path d="M10.6 -5.4 A11.2 11.2 0 1 0 -0.3 10.9" stroke="#ced0d6" stroke-width="2.2" stroke-linecap="round" stroke-linejoin="round" stroke-linecap="butt"/><path d="M2.3 -5.2 H11.2 V-14.3" stroke="#ced0d6" stroke-width="2.2" stroke-linecap="butt" stroke-linejoin="miter"/><path d="M4 5.8 L0.8 3.9 M12 5.8 L15.2 3.9 M4.8 13 L0.8 15 M11.2 13 L15.2 15" stroke="#5fad65" stroke-width="2" stroke-linecap="round"/><path d="M4.4 5.5 A3.6 3.9 0 0 1 11.6 5.5" stroke="#5fad65" stroke-width="2"/><circle cx="8" cy="9.4" r="4.7" stroke="#5fad65" stroke-width="2" fill="#253627"/></svg>
<svg style="left:456.0px;top:1404.0px;" width="56" height="56" viewBox="-28 -28 56 56" fill="none"><rect x="-11.5" y="-11.5" width="23" height="23" rx="4" stroke="#db5c5c" stroke-width="2.2" fill="#5e3838"/></svg>
<div style="left:516px;top:1412px;width:2px;height:40px;background:#43454a;"></div>
<svg style="left:522.0px;top:1404.0px;" width="56" height="56" viewBox="-28 -28 56 56" fill="none"><rect x="-13" y="-10.5" width="6.5" height="21.5" rx="1.5" stroke="#5fad65" stroke-width="2" fill="#253627"/><path d="M-0.5 -10.5 L14 0.3 L-0.5 11 Z" stroke="#5fad65" stroke-width="2" fill="#253627" stroke-linejoin="round"/></svg>
<svg style="left:574.0px;top:1404.0px;" width="56" height="56" viewBox="-28 -28 56 56" fill="none"><rect x="-9.5" y="-10.5" width="6.5" height="21.5" rx="1" stroke="#5a5d63" stroke-width="2" fill="none"/><rect x="3" y="-10.5" width="6.5" height="21.5" rx="1" stroke="#5a5d63" stroke-width="2" fill="none"/></svg>
<svg style="left:626.0px;top:1404.0px;" width="56" height="56" viewBox="-28 -28 56 56" fill="none"><path d="M-11.5 1.5 L0 -7.5 L11 3" stroke="#ced0d6" stroke-width="2.2" stroke-linecap="round" stroke-linejoin="round"/><path d="M11.5 -6 V3.5 H2.5" stroke="#ced0d6" stroke-width="2.2" stroke-linecap="round" stroke-linejoin="round"/><path d="M-12 13 H12" stroke="#ced0d6" stroke-width="2.2" stroke-linecap="round" stroke-linejoin="round"/></svg>
<svg style="left:678.0px;top:1404.0px;" width="56" height="56" viewBox="-28 -28 56 56" fill="none"><path d="M0 -12 V7 M-9.5 -2 L0 7.5 L9.5 -2" stroke="#ced0d6" stroke-width="2.2" stroke-linecap="round" stroke-linejoin="round"/><path d="M-12 13 H12" stroke="#ced0d6" stroke-width="2.2" stroke-linecap="round" stroke-linejoin="round"/></svg>
<svg style="left:730.0px;top:1404.0px;" width="56" height="56" viewBox="-28 -28 56 56" fill="none"><path d="M0 7.5 V-11.5 M-9.5 -2.5 L0 -12 L9.5 -2.5" stroke="#ced0d6" stroke-width="2.2" stroke-linecap="round" stroke-linejoin="round"/><path d="M-12 13 H12" stroke="#ced0d6" stroke-width="2.2" stroke-linecap="round" stroke-linejoin="round"/></svg>
<div style="left:790px;top:1412px;width:2px;height:40px;background:#43454a;"></div>
<svg style="left:796.0px;top:1404.0px;" width="56" height="56" viewBox="-28 -28 56 56" fill="none"><circle cx="5" cy="-4.3" r="8.8" stroke="#db5c5c" stroke-width="2.2" fill="#5e3030"/><circle cx="-4.3" cy="3.2" r="8.8" stroke="#db5c5c" stroke-width="2.2" fill="#5e3030"/></svg>
<svg style="left:848.0px;top:1404.0px;" width="56" height="56" viewBox="-28 -28 56 56" fill="none"><circle cx="0" cy="0" r="10.3" stroke="#db5c5c" stroke-width="2.2" fill="#5e3030"/><path d="M-11.5 11.5 L12 -11.5" stroke="#2b2d30" stroke-width="5.5"/><path d="M-11.5 11.5 L12 -11.5" stroke="#ced0d6" stroke-width="2.2" stroke-linecap="round" stroke-linejoin="round"/></svg>
<svg style="left:900.0px;top:1404.0px;" width="56" height="56" viewBox="-28 -28 56 56" fill="none"><path d="M-13.5 -10.5 L-1 0.8 M-1.5 -8 V1 H-10.5" stroke="#ced0d6" stroke-width="2.2" stroke-linecap="round" stroke-linejoin="round"/><path d="M8.7 -1 V13 M5.5 -1.3 H12 M5.5 13.3 H12" stroke="#548af7" stroke-width="2" stroke-linecap="round"/></svg>
<svg style="left:976px;top:1418px;" width="8" height="28" viewBox="0 0 8 28" fill="none"><circle cx="4" cy="4" r="2.3" fill="#ced0d6"/><circle cx="4" cy="14" r="2.3" fill="#ced0d6"/><circle cx="4" cy="24" r="2.3" fill="#ced0d6"/></svg>
<svg style="left:1326.0px;top:1404.0px;" width="56" height="56" viewBox="-28 -28 56 56" fill="none"><rect x="-12.5" y="-11.5" width="25" height="23" rx="3.5" stroke="#ced0d6" stroke-width="2.2" stroke-linecap="round" stroke-linejoin="round"/><path d="M-2 -11.5 V11.5 M-2 0 H12.5" stroke="#ced0d6" stroke-width="2.2" stroke-linecap="round" stroke-linejoin="round"/></svg>
<svg style="left:751.5px;top:12.0px;" width="56" height="56" viewBox="-28 -28 56 56" fill="none"><rect x="-15" y="-11.5" width="27" height="22.5" rx="3" stroke="#ced0d6" stroke-width="2" fill="#43454a"/><path d="M-10 -5 H-6.5 M-4 -5 H-0.5" stroke="#ced0d6" stroke-width="2"/><rect x="2" y="3" width="16" height="14" fill="#2a3334"/><path d="M4.5 14 L14.5 4 M7 3.5 H15 V11.5" stroke="#548af7" stroke-width="2.2" stroke-linecap="round" stroke-linejoin="round"/><circle cx="10.7" cy="-10" r="7.6" fill="#2a3334"/><circle cx="10.7" cy="-10" r="5.8" fill="#5fad65"/></svg>
<svg style="left:1030.0px;top:12.0px;" width="56" height="56" viewBox="-28 -28 56 56" fill="none"><path d="M8.95 -7.1 A12 12 0 1 0 -7.46 9.7" stroke="#eef0f3" stroke-width="2.8"/><path d="M-1.6 -6.5 H8.1 V-15.8" stroke="#eef0f3" stroke-width="2.8" stroke-linejoin="miter"/><path d="M-3.2 3.9 L15.8 13.3 M15.8 3.9 L-3.2 13.3" stroke="#eef0f3" stroke-width="2.7" stroke-linecap="round"/><path d="M2.7 6.5 A3.6 5.6 0 0 1 9.9 6.5" stroke="#eef0f3" stroke-width="2.2"/><ellipse cx="6.3" cy="10.4" rx="3.6" ry="4.4" stroke="#eef0f3" stroke-width="2.2" fill="#57965c"/></svg>
<svg style="left:1272.0px;top:12.0px;" width="56" height="56" viewBox="-28 -28 56 56" fill="none"><circle cx="0" cy="-10.2" r="6.8" stroke="#ced0d6" stroke-width="2.5" stroke-linecap="round" stroke-linejoin="round"/><path d="M-0.5 14.7 H-14 C-13 7 -7.5 1.8 0 1.8 C2.5 1.8 4.7 2.4 6.6 3.4" stroke="#ced0d6" stroke-width="2.5" stroke-linecap="round" stroke-linejoin="round"/><path d="M4 11.5 H19.5 M11.5 4 V19.3" stroke="#ced0d6" stroke-width="2.5" stroke-linecap="round" stroke-linejoin="round"/></svg>
<svg style="left:1350.0px;top:12.0px;" width="56" height="56" viewBox="-28 -28 56 56" fill="none"><path d="M16.5 -15.5 C8 -15.5 0 -11 -5.5 -4 L-11.5 -4.5 L-16 2 L-9.5 3 C-9 6.5 -6 9.5 -2.5 10 L-1.5 16.5 L5 12 L4.5 6" stroke="#ced0d6" stroke-width="2.5" stroke-linecap="round" stroke-linejoin="round"/><path d="M16.5 -15.5 C16.5 -7 12.5 0 7 5" stroke="#ced0d6" stroke-width="2.5" stroke-linecap="round" stroke-linejoin="round"/><path d="M4 6.5 L15 12 L4 17.5 Z" stroke="#548af7" stroke-width="2.4" stroke-linejoin="round" fill="none"/></svg>
<svg style="left:1430.0px;top:14.0px;" width="56" height="56" viewBox="-28 -28 56 56" fill="none"><path d="M16.5 -15.5 C8 -15.5 0 -11 -5.5 -4 L-11.5 -4.5 L-16 2 L-9.5 3 C-9 6.5 -6 9.5 -2.5 10 L-1.5 16.5 L5 12 L4.5 6" stroke="#ced0d6" stroke-width="2.5" stroke-linecap="round" stroke-linejoin="round"/><path d="M16.5 -15.5 C16.5 -7 12.5 0 7 5" stroke="#ced0d6" stroke-width="2.5" stroke-linecap="round" stroke-linejoin="round"/></svg>
<svg style="left:130.0px;top:94.0px;" width="56" height="56" viewBox="-28 -28 56 56" fill="none"><circle cx="0" cy="0" r="12.9" stroke="#548af7" stroke-width="2" fill="#25324d"/><path d="M4.6 -4.3 A6.3 6.3 0 1 0 4.6 4.3" stroke="#548af7" stroke-width="2" stroke-linecap="round"/></svg>
<svg style="left:253.5px;top:1329.5px;" width="56" height="56" viewBox="-28 -28 56 56" fill="none"><rect x="-15" y="-11.5" width="27" height="22.5" rx="3" stroke="#ced0d6" stroke-width="2" fill="#43454a"/><path d="M-10 -5 H-6.5 M-4 -5 H-0.5" stroke="#ced0d6" stroke-width="2"/><rect x="2" y="3" width="16" height="14" fill="#2b2d30"/><path d="M4.5 14 L14.5 4 M7 3.5 H15 V11.5" stroke="#548af7" stroke-width="2.2" stroke-linecap="round" stroke-linejoin="round"/><circle cx="10.7" cy="-10" r="7.6" fill="#2b2d30"/><circle cx="10.7" cy="-10" r="5.8" fill="#5fad65"/></svg>
<svg style="left:684.0px;top:1990.5px;" width="56" height="56" viewBox="-28 -28 56 56" fill="none"><circle cx="0" cy="0" r="12.9" stroke="#548af7" stroke-width="2" fill="#25324d"/><path d="M4.6 -4.3 A6.3 6.3 0 1 0 4.6 4.3" stroke="#548af7" stroke-width="2" stroke-linecap="round"/></svg>
<svg style="left:878.5px;top:2005px" width="30" height="30" viewBox="-15 -15 30 30"><defs><linearGradient id="vg893" x1="0" y1="0" x2="0.6" y2="1"><stop offset="0" stop-color="#3fdd55"/><stop offset="0.55" stop-color="#18b7a4"/><stop offset="1" stop-color="#1f6ff2"/></linearGradient></defs><path d="M-12.5 -12.7 H-4 L-3.4 2 L4.2 -12.7 H13 L-0.5 12.8 H-12 Z" fill="url(#vg893)"/></svg>
<svg style="left:996.0px;top:1992.0px;" width="56" height="56" viewBox="-28 -28 56 56" fill="none"><path d="M8.2 -6.2 A9.8 9.8 0 0 0 -8.3 -5.2" stroke="#ea4335" stroke-width="4.4"/><path d="M-8.3 -5.2 A9.8 9.8 0 0 0 -8.3 5.2" stroke="#fbbc05" stroke-width="4.4"/><path d="M-8.3 5.2 A9.8 9.8 0 0 0 7 6.9" stroke="#34a853" stroke-width="4.4"/><path d="M7 6.9 A9.8 9.8 0 0 0 9.8 0 H0.5" stroke="#4285f4" stroke-width="4.2"/></svg>
<svg style="left:1378.0px;top:1991.0px;" width="56" height="56" viewBox="-28 -28 56 56" fill="none"><rect x="-10" y="-2.3" width="19.5" height="14.3" rx="3.5" stroke="#ced0d6" stroke-width="2.2" stroke-linecap="round" stroke-linejoin="round"/><path d="M4 -2.5 V-5 A5.2 5.2 0 0 1 14.4 -5 V-2" stroke="#ced0d6" stroke-width="2.2" stroke-linecap="round" stroke-linejoin="round"/><path d="M-0.3 2.3 V7.3" stroke="#ced0d6" stroke-width="2.2" stroke-linecap="round" stroke-linejoin="round"/></svg>
</div></div>
<div style="left:0;top:0;width:1458px;height:2048px;border-radius:20px;box-shadow:inset 0 0 0 1.5px rgba(255,255,255,.22), inset 0 2px 0 0 rgba(255,255,255,.3);"></div>
</body></html>
